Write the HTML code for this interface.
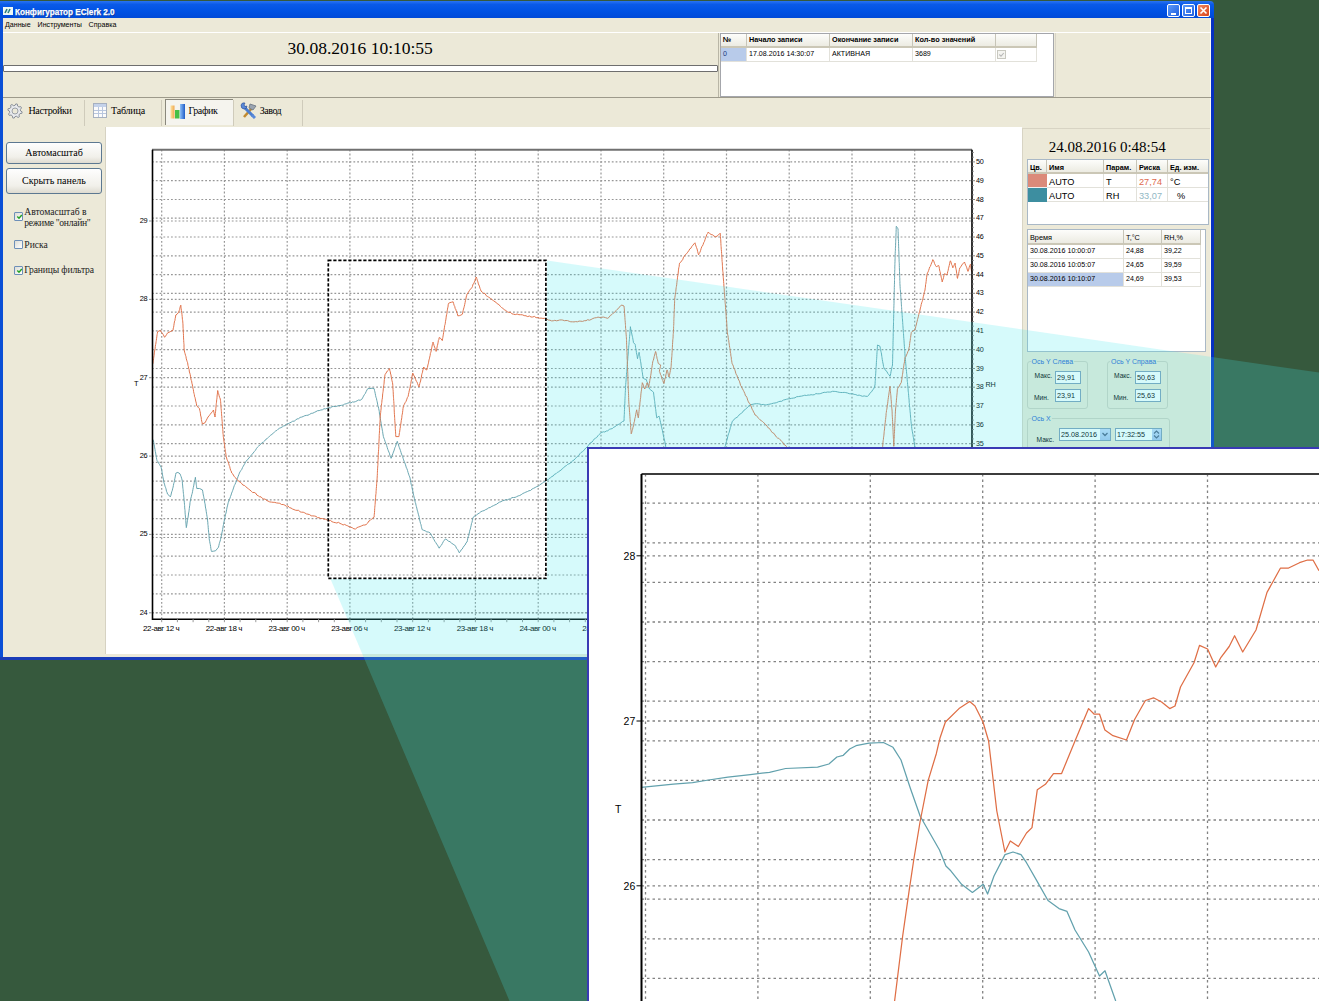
<!DOCTYPE html>
<html><head><meta charset="utf-8">
<style>
html,body{margin:0;padding:0}
body{width:1319px;height:1001px;overflow:hidden;position:relative;background:#36593d;font-family:"Liberation Sans",sans-serif;color:#000}
.a{position:absolute}
.serif{font-family:"Liberation Serif",serif}
.nw{white-space:nowrap}
#win{left:0;top:0;width:1214px;height:660px;background:transparent;overflow:hidden}
#title{left:0;top:1px;width:1214px;height:17px;border-radius:0 4px 0 0;background:linear-gradient(#2a74f2 0%,#0a5ae8 20%,#0052e4 60%,#004ad8 100%)}
.bl{background:#0a4fd6}
.tb td{position:absolute;white-space:nowrap;overflow:hidden}
.cell{position:absolute;white-space:nowrap;overflow:hidden;box-sizing:border-box}
.hd{background:linear-gradient(#fdfdfb,#ecebe2);border-right:1px solid #c7c5b8;border-bottom:2px solid #cbc7b6;font-weight:bold;font-size:7.3px;padding-left:2px;line-height:15px}
.rw{border-right:1px solid #e2e1da;border-bottom:1px solid #e2e1da;font-size:7.1px;padding-left:2px;line-height:13px}
.btn{position:absolute;box-sizing:border-box;border:1px solid #5c7891;border-radius:3px;background:linear-gradient(#fefefe,#f1f0ea 70%,#dedbd0);font-family:"Liberation Serif",serif;font-size:10px;text-align:center}
.cb{position:absolute;width:9px;height:9px;box-sizing:border-box;border:1px solid #6d8fb8;border-radius:1px;background:linear-gradient(135deg,#dcdcd5,#fff)}
.ck{position:absolute;left:1px;top:0px}
.lbl{position:absolute;font-family:"Liberation Serif",serif;font-size:9.6px;white-space:nowrap;line-height:10px;color:#222}
.tab{position:absolute;top:98px;height:28px;font-family:"Liberation Serif",serif;font-size:10px}
.sep{position:absolute;top:100px;width:1px;height:26px;background:#cfcbbb}
.gb{position:absolute;box-sizing:border-box;border:1px solid #d0d0bf;border-radius:3px}
.gt{position:absolute;color:#2a64d0;font-size:7px;background:#ece9d8;padding:0 1px;white-space:nowrap}
.sl{position:absolute;font-size:6.7px;white-space:nowrap}
.inp{position:absolute;box-sizing:border-box;border:1px solid #7f9db9;background:#fff;font-size:7.2px;padding-left:1px;line-height:11px;white-space:nowrap}
</style></head><body>
<div id="win" class="a">
  <div class="a" style="left:0;top:18px;width:1214px;height:642px;background:#ece9d8"></div>
  <div id="title" class="a">
    <svg class="a" style="left:3px;top:6px" width="10" height="8"><rect x="0" y="0" width="10" height="8" fill="#eef8f4"/><path d="M2,6 L4,2 M5,6 L7,2" stroke="#2a7a78" stroke-width="1.6"/><path d="M4.5,4 L5.5,4" stroke="#5ac8e8" stroke-width="1"/></svg>
    <div class="a nw" style="left:14.5px;top:5px;color:#fff;font-weight:bold;font-size:9.8px;transform:scaleX(0.83);transform-origin:0 0;text-shadow:1px 1px 0 #0a3aa0;-webkit-text-stroke:0.25px #fff">Конфигуратор EClerk 2.0</div>
    <div class="a" style="left:1167px;top:3px;width:13px;height:13px;box-sizing:border-box;border:1px solid #fff;border-radius:2px;background:linear-gradient(135deg,#5d9af8,#1f5fe0)"><div class="a" style="left:3px;top:8px;width:5px;height:2px;background:#fff"></div></div>
    <div class="a" style="left:1182px;top:3px;width:13px;height:13px;box-sizing:border-box;border:1px solid #fff;border-radius:2px;background:linear-gradient(135deg,#5d9af8,#1f5fe0)"><div class="a" style="left:2px;top:2px;width:7px;height:7px;box-sizing:border-box;border:1px solid #fff;border-top-width:2px"></div></div>
    <div class="a" style="left:1197px;top:3px;width:13px;height:13px;box-sizing:border-box;border:1px solid #fff;border-radius:2px;background:linear-gradient(135deg,#f08a60,#d8431c)"><svg class="a" style="left:1px;top:1px" width="9" height="9"><path d="M1.5,1.5 L7.5,7.5 M7.5,1.5 L1.5,7.5" stroke="#fff" stroke-width="1.6"/></svg></div>
  </div>
  <div class="a bl" style="left:0;top:18px;width:3px;height:642px"></div>
  <div class="a bl" style="left:1211px;top:18px;width:3px;height:642px;background:#0630c0"></div><div class="a" style="left:1210px;top:18px;width:1px;height:642px;background:#f8f8f0"></div>
  <div class="a bl" style="left:0;top:657px;width:1214px;height:3px;background:#1a3cb8"></div>
  <div class="a nw" style="left:5px;top:21px;font-size:7.1px">Данные</div>
  <div class="a nw" style="left:37.6px;top:21px;font-size:7.1px">Инструменты</div>
  <div class="a nw" style="left:88.6px;top:21px;font-size:7.1px">Справка</div>
  <div class="a" style="left:3px;top:32px;width:1208px;height:1px;background:#fff"></div>
  <!-- top panel -->
  <div class="a serif nw" style="left:287.5px;top:38px;font-size:17.5px">30.08.2016 10:10:55</div>
  <div class="a" style="left:3px;top:65px;width:715px;height:7px;box-sizing:border-box;background:#fff;border:1px solid #6e6e6e;border-radius:1px"></div>
  <div class="a" style="left:718px;top:33px;width:1px;height:64px;background:#b9b6a6"></div><div class="a" style="left:1055px;top:33px;width:1px;height:64px;background:#d8d4c6"></div>
  <div class="a" style="left:720px;top:33px;width:334px;height:64px;box-sizing:border-box;background:#fff;border:1px solid #a4a6ab;overflow:hidden">
    <div class="cell hd" style="line-height:12px;left:0;top:0;width:26px;height:14px">№</div>
    <div class="cell hd" style="line-height:12px;left:26px;top:0;width:83px;height:14px">Начало записи</div>
    <div class="cell hd" style="line-height:12px;left:109px;top:0;width:83px;height:14px">Окончание записи</div>
    <div class="cell hd" style="line-height:12px;left:192px;top:0;width:83px;height:14px">Кол-во значений</div>
    <div class="cell hd" style="line-height:12px;left:275px;top:0;width:41px;height:14px"></div>
    <div class="cell rw" style="left:0;top:14px;width:26px;height:14px;background:#b8cbea;color:#1a3a80">0</div>
    <div class="cell rw" style="left:26px;top:14px;width:83px;height:14px">17.08.2016 14:30:07</div>
    <div class="cell rw" style="left:109px;top:14px;width:83px;height:14px">АКТИВНАЯ</div>
    <div class="cell rw" style="left:192px;top:14px;width:83px;height:14px">3689</div>
    <div class="cell rw" style="left:275px;top:14px;width:41px;height:14px"><div class="a" style="left:1px;top:2px;width:7px;height:7px;border:1px solid #c8c8c0;background:#f4f4f0"><svg class="a" style="left:0;top:0" width="7" height="7"><path d="M1.3,3.5 L3,5.2 L5.8,2" stroke="#b8b8b8" stroke-width="1.1" fill="none"/></svg></div></div>
  </div>
  <div class="a" style="left:3px;top:97px;width:1208px;height:1px;background:#9d9a8b"></div>
  <!-- tabs -->
  <div class="sep" style="left:84px"></div>
  <div class="sep" style="left:161px"></div>
  <div class="sep" style="left:233px"></div>
  <div class="sep" style="left:302px"></div>
  <div class="a" style="left:165px;top:99px;width:68px;height:26px;background:#f5f4ee;border-top:1px solid #8a887c;border-left:1px solid #8a887c;box-sizing:border-box"></div>
  <svg class="a" style="left:7px;top:103px" width="16" height="16" viewBox="0 0 16 16"><path d="M13.60,8.00 L15.15,8.85 L14.75,10.49 L12.99,10.54 L11.96,11.96 L12.46,13.65 L11.01,14.54 L9.73,13.33 L8.00,13.60 L7.15,15.15 L5.51,14.75 L5.46,12.99 L4.04,11.96 L2.35,12.46 L1.46,11.01 L2.67,9.73 L2.40,8.00 L0.85,7.15 L1.25,5.51 L3.01,5.46 L4.04,4.04 L3.54,2.35 L4.99,1.46 L6.27,2.67 L8.00,2.40 L8.85,0.85 L10.49,1.25 L10.54,3.01 L11.96,4.04 L13.65,3.54 L14.54,4.99 L13.33,6.27Z" fill="#e8eaee" stroke="#8a9098" stroke-width="1"/><circle cx="8" cy="8" r="3" fill="#ece9d8" stroke="#9aa0a8" stroke-width="1"/></svg>
  <div class="tab nw" style="left:28.5px;top:105px;letter-spacing:-0.35px">Настройки</div>
  <svg class="a" style="left:93px;top:103px" width="15" height="16" viewBox="0 0 15 16"><rect x="0.5" y="0.5" width="13" height="14" fill="#fbfbfb" stroke="#a6b0c0"/><rect x="1" y="1" width="12" height="3" fill="#c4d2ea"/><path d="M1,7.5H13M1,10.5H13M5.5,4V14M9.5,4V14" stroke="#b8c6de" stroke-width="1"/></svg>
  <div class="tab nw" style="left:111px;top:105px;letter-spacing:-0.2px">Таблица</div>
  <svg class="a" style="left:170px;top:103px" width="16" height="17" viewBox="0 0 16 17"><defs><linearGradient id="gy" x1="0" x2="1"><stop offset="0" stop-color="#fde3a0"/><stop offset="1" stop-color="#f0a850"/></linearGradient><linearGradient id="gb" x1="0" x2="1"><stop offset="0" stop-color="#8ec0f8"/><stop offset="1" stop-color="#1f5cc8"/></linearGradient></defs><rect x="0.5" y="2.5" width="4" height="13" fill="url(#gy)"/><rect x="5" y="7" width="4.5" height="8.5" fill="#46c046"/><rect x="10" y="1" width="5" height="15" fill="url(#gb)"/></svg>
  <div class="tab nw" style="left:188.5px;top:105px;letter-spacing:-0.4px">График</div>
  <svg class="a" style="left:240px;top:102px" width="18" height="17" viewBox="0 0 18 17"><path d="M4,15 L12,6" stroke="#c08a30" stroke-width="2.6"/><path d="M10,2 L16,4 L13,8 L9,6 Z" fill="#9aa4b0" stroke="#6a7480" stroke-width="0.8"/><path d="M3.5,4.5 L13,14" stroke="#4a7ed0" stroke-width="3"/><path d="M1,3 Q2,0 5,1 L4,3 L5,4.5 L7,4 Q7,7 4,7 Q1,7 1,3Z" fill="#5a8ad8" stroke="#2a4a90" stroke-width="0.6"/><path d="M12,13 L15,16" stroke="#5a8ad8" stroke-width="3"/></svg>
  <div class="tab nw" style="left:259.8px;top:105px;letter-spacing:-0.5px">Завод</div>
  <!-- content -->
  <div class="a" style="left:105px;top:127px;width:1px;height:527px;background:#d6d2c2"></div>
  <div class="a" style="left:106px;top:127px;width:916px;height:527px;background:#fff"></div>
  <div class="btn" style="left:6px;top:142px;width:96px;height:22px;line-height:20px">Автомасштаб</div>
  <div class="btn" style="left:6px;top:168px;width:96px;height:26px;line-height:24px">Скрыть панель</div>
  <div class="cb" style="left:14px;top:212px"><svg class="ck" width="7" height="7"><path d="M1.3,3.5 L3,5.2 L5.8,2" stroke="#21a121" stroke-width="1.4" fill="none"/></svg></div>
  <div class="lbl" style="left:24.3px;top:206.5px">Автомасштаб в</div>
  <div class="lbl" style="left:24.3px;top:217.5px;letter-spacing:-0.3px">режиме "онлайн"</div>
  <div class="cb" style="left:14px;top:240px"></div>
  <div class="lbl" style="left:24.3px;top:239.5px">Риска</div>
  <div class="cb" style="left:14px;top:265.5px"><svg class="ck" width="7" height="7"><path d="M1.3,3.5 L3,5.2 L5.8,2" stroke="#21a121" stroke-width="1.4" fill="none"/></svg></div>
  <div class="lbl" style="left:24.3px;top:265px;letter-spacing:-0.15px">Границы фильтра</div>
  <!-- right panel -->
  <div class="a" style="left:1022px;top:128px;width:188px;height:530px;box-sizing:border-box;border-left:1px solid #d8d4c4;border-top:1px solid #d8d4c4"></div>
  <div class="a serif nw" style="left:1048.7px;top:138.5px;font-size:15px">24.08.2016 0:48:54</div>
  <div class="a" style="left:1027px;top:159px;width:182px;height:66px;box-sizing:border-box;background:#fff;border:1px solid #a9b8c6;overflow:hidden">
    <div class="cell hd" style="left:0;top:0;width:19px;height:14px">Цв.</div>
    <div class="cell hd" style="left:19px;top:0;width:57px;height:14px">Имя</div>
    <div class="cell hd" style="left:76px;top:0;width:33px;height:14px">Парам.</div>
    <div class="cell hd" style="left:109px;top:0;width:31px;height:14px">Риска</div>
    <div class="cell hd" style="left:140px;top:0;width:42px;height:14px">Ед. изм.</div>
    <div class="cell" style="left:0;top:14px;width:19px;height:14px;background:#db8a7a;border-bottom:1px solid #f0f0f0"></div>
    <div class="cell" style="left:0;top:28px;width:19px;height:14px;background:#3d8ea0"></div>
    <div class="cell rw" style="left:19px;top:14px;width:57px;height:14px;font-size:9.2px;line-height:17px">AUTO</div>
    <div class="cell rw" style="left:76px;top:14px;width:33px;height:14px;font-size:9.2px;line-height:17px">T</div>
    <div class="cell rw" style="left:109px;top:14px;width:31px;height:14px;font-size:9.2px;line-height:17px;color:#e06a4e">27,74</div>
    <div class="cell rw" style="left:140px;top:14px;width:42px;height:14px;font-size:9.2px;line-height:17px">°C</div>
    <div class="cell rw" style="left:19px;top:28px;width:57px;height:14px;font-size:9.2px;line-height:17px">AUTO</div>
    <div class="cell rw" style="left:76px;top:28px;width:33px;height:14px;font-size:9.2px;line-height:17px">RH</div>
    <div class="cell rw" style="left:109px;top:28px;width:31px;height:14px;font-size:9.2px;line-height:17px;color:#92b8c4">33,07</div>
    <div class="cell rw" style="left:140px;top:28px;width:42px;height:14px;font-size:9.2px;line-height:17px;padding-left:9px">%</div>
  </div>
  <div class="a" style="left:1027px;top:229px;width:179px;height:123px;box-sizing:border-box;background:#fff;border:1px solid #a9b8c6;overflow:hidden">
    <div class="cell hd" style="left:0;top:0;width:96px;height:15px;font-weight:normal">Время</div>
    <div class="cell hd" style="left:96px;top:0;width:38px;height:15px;font-weight:normal">T,°C</div>
    <div class="cell hd" style="left:134px;top:0;width:39px;height:15px;font-weight:normal">RH,%</div>
    <div class="cell rw" style="left:0;top:15px;width:96px;height:14px">30.08.2016 10:00:07</div>
    <div class="cell rw" style="left:96px;top:15px;width:38px;height:14px">24,88</div>
    <div class="cell rw" style="left:134px;top:15px;width:39px;height:14px">39,22</div>
    <div class="cell rw" style="left:0;top:29px;width:96px;height:14px">30.08.2016 10:05:07</div>
    <div class="cell rw" style="left:96px;top:29px;width:38px;height:14px">24,65</div>
    <div class="cell rw" style="left:134px;top:29px;width:39px;height:14px">39,59</div>
    <div class="cell rw" style="left:0;top:43px;width:96px;height:14px;background:#b8cbea">30.08.2016 10:10:07</div>
    <div class="cell rw" style="left:96px;top:43px;width:38px;height:14px">24,69</div>
    <div class="cell rw" style="left:134px;top:43px;width:39px;height:14px">39,53</div>
  </div>
  <div class="gb" style="left:1027px;top:361px;width:61px;height:48px"></div>
  <div class="gt" style="left:1030.5px;top:357.5px">Ось Y Слева</div>
  <div class="sl" style="left:1034.6px;top:372px">Макс.</div>
  <div class="inp" style="left:1055px;top:371px;width:26px;height:13px">29,91</div>
  <div class="sl" style="left:1034px;top:394px">Мин.</div>
  <div class="inp" style="left:1055px;top:389px;width:26px;height:13px">23,91</div>
  <div class="gb" style="left:1107px;top:361px;width:61px;height:48px"></div>
  <div class="gt" style="left:1110px;top:357.5px">Ось Y Справа</div>
  <div class="sl" style="left:1114px;top:372px">Макс.</div>
  <div class="inp" style="left:1135px;top:371px;width:26px;height:13px">50,63</div>
  <div class="sl" style="left:1113.5px;top:394px">Мин.</div>
  <div class="inp" style="left:1135px;top:389px;width:26px;height:13px">25,63</div>
  <div class="gb" style="left:1027px;top:418px;width:143px;height:60px"></div>
  <div class="gt" style="left:1030.5px;top:414.5px">Ось X</div>
  <div class="sl" style="left:1036.5px;top:435.5px">Макс.</div>
  <div class="inp" style="left:1059px;top:428px;width:52px;height:13px">25.08.2016<div class="a" style="right:0;top:0;width:10px;height:11px;background:linear-gradient(#c6d8f8,#a8c2ee)"><svg class="a" style="left:2px;top:3px" width="6" height="5"><path d="M0.5,1 L3,3.5 L5.5,1" stroke="#4d6185" stroke-width="1.3" fill="none"/></svg></div></div>
  <div class="inp" style="left:1115px;top:428px;width:47px;height:13px">17:32:55<div class="a" style="right:0;top:0;width:9px;height:11px;background:linear-gradient(#c6d8f8,#a8c2ee)"><svg class="a" style="left:1px;top:1px" width="7" height="9"><path d="M1,3.5 L3.5,1 L6,3.5 M1,5.5 L3.5,8 L6,5.5" stroke="#4d6185" stroke-width="1.1" fill="none"/></svg></div></div>
</div>
<svg width="1319" height="1001" style="position:absolute;left:0;top:0">
<defs><clipPath id="cp"><rect x="152.0" y="149.8" width="820.0" height="469.40000000000003"/></clipPath></defs>
<g stroke="#979797" stroke-width="1.2" stroke-dasharray="1.8 2"><line x1="161.7" y1="149.8" x2="161.7" y2="619.2"/><line x1="224.4" y1="149.8" x2="224.4" y2="619.2"/><line x1="287.2" y1="149.8" x2="287.2" y2="619.2"/><line x1="349.9" y1="149.8" x2="349.9" y2="619.2"/><line x1="412.7" y1="149.8" x2="412.7" y2="619.2"/><line x1="475.4" y1="149.8" x2="475.4" y2="619.2"/><line x1="538.2" y1="149.8" x2="538.2" y2="619.2"/><line x1="601.0" y1="149.8" x2="601.0" y2="619.2"/><line x1="663.7" y1="149.8" x2="663.7" y2="619.2"/><line x1="726.5" y1="149.8" x2="726.5" y2="619.2"/><line x1="789.2" y1="149.8" x2="789.2" y2="619.2"/><line x1="852.0" y1="149.8" x2="852.0" y2="619.2"/><line x1="914.7" y1="149.8" x2="914.7" y2="619.2"/><line x1="152.0" y1="612.6" x2="972.0" y2="612.6"/><line x1="152.0" y1="593.8" x2="972.0" y2="593.8"/><line x1="152.0" y1="575.0" x2="972.0" y2="575.0"/><line x1="152.0" y1="556.2" x2="972.0" y2="556.2"/><line x1="152.0" y1="537.5" x2="972.0" y2="537.5"/><line x1="152.0" y1="518.7" x2="972.0" y2="518.7"/><line x1="152.0" y1="499.9" x2="972.0" y2="499.9"/><line x1="152.0" y1="481.1" x2="972.0" y2="481.1"/><line x1="152.0" y1="462.3" x2="972.0" y2="462.3"/><line x1="152.0" y1="443.6" x2="972.0" y2="443.6"/><line x1="152.0" y1="424.8" x2="972.0" y2="424.8"/><line x1="152.0" y1="406.0" x2="972.0" y2="406.0"/><line x1="152.0" y1="387.2" x2="972.0" y2="387.2"/><line x1="152.0" y1="368.5" x2="972.0" y2="368.5"/><line x1="152.0" y1="349.7" x2="972.0" y2="349.7"/><line x1="152.0" y1="330.9" x2="972.0" y2="330.9"/><line x1="152.0" y1="312.1" x2="972.0" y2="312.1"/><line x1="152.0" y1="293.3" x2="972.0" y2="293.3"/><line x1="152.0" y1="274.6" x2="972.0" y2="274.6"/><line x1="152.0" y1="255.8" x2="972.0" y2="255.8"/><line x1="152.0" y1="237.0" x2="972.0" y2="237.0"/><line x1="152.0" y1="218.2" x2="972.0" y2="218.2"/><line x1="152.0" y1="199.5" x2="972.0" y2="199.5"/><line x1="152.0" y1="180.7" x2="972.0" y2="180.7"/><line x1="152.0" y1="161.9" x2="972.0" y2="161.9"/><line x1="152.0" y1="612.8" x2="972.0" y2="612.8"/><line x1="152.0" y1="534.4" x2="972.0" y2="534.4"/><line x1="152.0" y1="456.1" x2="972.0" y2="456.1"/><line x1="152.0" y1="377.7" x2="972.0" y2="377.7"/><line x1="152.0" y1="299.4" x2="972.0" y2="299.4"/><line x1="152.0" y1="221.0" x2="972.0" y2="221.0"/></g>
<g clip-path="url(#cp)" fill="none" stroke-width="0.95" stroke-linejoin="round">
<polyline points="152.8,439.4 153.5,441.0 153.8,442.7 154.1,444.5 154.4,446.2 154.7,447.9 155.0,449.4 155.2,451.2 155.5,451.9 155.8,454.0 156.1,456.1 156.4,457.4 156.7,459.3 157.0,460.5 157.8,461.5 158.7,463.3 159.5,464.4 160.4,466.1 161.2,467.5 161.5,469.3 161.8,470.4 162.1,472.4 162.4,474.1 162.8,476.5 163.1,478.0 163.4,479.1 163.7,481.5 164.0,482.9 164.5,484.1 165.0,486.2 165.5,487.3 166.0,488.8 166.5,491.3 167.0,492.2 167.5,494.1 168.9,495.2 170.3,496.9 170.8,495.7 171.2,494.0 171.7,491.8 172.2,490.8 172.6,488.8 173.1,487.1 173.4,485.5 173.8,483.3 174.2,482.3 174.5,480.3 174.8,478.8 175.2,477.0 175.6,474.6 175.9,473.1 177.9,472.4 180.0,473.8 180.5,475.2 181.1,476.6 181.6,478.2 182.1,480.1 182.3,481.3 182.4,483.1 182.6,485.0 182.7,486.0 182.9,488.3 183.1,489.6 183.2,491.2 183.4,493.3 183.6,494.5 183.7,496.0 183.9,497.8 184.0,499.6 184.2,501.0 184.3,502.2 184.5,504.8 184.6,505.5 184.7,507.9 184.9,509.7 185.0,510.5 185.1,512.9 185.2,514.2 185.4,516.0 185.5,517.1 185.6,518.8 185.8,520.6 185.9,523.1 186.0,524.0 186.2,526.2 186.3,527.6 186.6,526.2 186.9,524.4 187.2,522.0 187.5,520.3 187.8,518.6 188.1,517.1 188.4,515.0 188.6,512.9 188.9,511.8 189.1,510.2 189.3,508.6 189.6,506.0 189.8,505.2 190.0,502.7 190.3,501.2 190.5,499.7 190.9,498.1 191.3,496.8 191.8,494.5 192.2,493.4 192.6,491.3 192.9,489.6 193.3,487.6 193.7,485.9 194.0,484.0 194.3,482.1 194.7,480.4 195.1,479.2 195.4,477.3 195.6,479.4 195.8,480.2 196.0,481.6 196.2,484.2 196.4,485.3 196.6,486.8 196.8,488.5 199.6,488.5 202.4,489.9 202.7,491.2 203.0,493.2 203.3,495.0 203.6,496.2 203.9,497.8 204.2,499.0 204.5,501.0 204.8,503.1 205.1,503.9 205.3,506.0 205.6,508.1 205.9,509.0 206.2,511.3 206.5,513.2 206.7,514.6 207.0,516.4 207.3,517.8 207.5,519.0 207.6,520.9 207.8,522.2 207.9,524.5 208.1,525.6 208.2,527.4 208.4,529.5 208.5,531.0 208.7,532.7 208.8,533.8 209.0,535.4 209.1,537.2 209.2,538.6 209.4,540.2 209.7,541.6 210.0,543.3 210.3,544.6 210.6,546.5 210.9,548.7 211.2,550.3 211.5,551.4 213.6,551.2 215.7,550.7 217.1,548.9 218.5,547.2 218.9,545.4 219.3,543.6 219.7,542.2 220.1,541.1 220.5,539.6 220.9,537.5 221.3,536.0 221.6,534.6 221.9,533.0 222.3,531.2 222.6,529.5 222.9,528.0 223.2,525.9 223.5,524.6 223.8,522.5 224.2,521.1 224.5,519.7 224.8,517.8 225.2,516.3 225.6,514.2 226.0,513.1 226.4,511.1 226.7,509.3 227.1,507.0 227.5,505.9 227.9,503.9 228.3,502.4 228.9,501.0 229.4,499.3 230.0,498.1 230.5,496.4 231.1,495.0 231.6,493.1 232.2,491.8 232.7,490.4 233.2,489.0 233.8,487.1 234.4,485.4 235.0,484.3 235.7,482.8 236.3,481.1 236.9,479.8 237.5,478.2 238.2,476.2 238.8,474.7 239.4,473.1 240.2,471.4 241.0,470.6 241.8,469.3 242.6,467.4 243.3,466.2 244.1,464.8 244.9,463.4 245.7,461.8 246.8,460.2 247.9,459.5 248.9,458.0 250.0,456.8 251.1,455.3 252.2,454.2 253.2,453.0 254.3,451.6 255.4,450.4 256.5,448.4 257.5,447.2 258.6,446.2 259.7,445.0 260.9,444.1 262.1,442.6 263.4,442.1 264.6,441.0 265.8,439.3 267.1,438.7 268.3,437.4 269.5,436.2 270.7,435.2 271.9,434.4 273.2,433.2 274.4,432.2 275.6,431.0 276.9,430.4 278.1,429.2 279.3,428.3 280.8,427.7 282.3,426.9 283.8,425.8 285.2,425.7 286.7,424.1 288.2,423.7 289.7,422.9 291.2,422.2 292.7,421.2 294.2,421.2 295.7,420.0 297.1,418.9 298.6,418.7 300.1,417.4 301.6,417.1 303.2,416.5 304.8,415.7 306.4,415.4 308.0,415.2 309.6,414.4 311.2,413.4 312.8,413.2 314.4,412.4 316.0,411.6 317.6,410.7 319.2,410.6 320.8,410.0 322.4,409.8 324.0,408.7 325.6,408.9 327.2,408.2 328.8,407.6 330.4,407.9 332.0,406.7 333.6,406.4 335.2,406.6 336.8,406.3 338.4,405.6 340.0,405.6 341.6,405.3 343.1,405.1 344.6,404.1 346.2,403.8 347.8,403.1 349.3,402.7 350.9,403.0 352.4,401.9 353.9,402.1 355.5,401.6 357.1,400.8 358.6,400.0 360.1,400.3 361.7,399.4 362.6,397.9 363.5,396.2 364.4,394.6 365.2,393.7 366.1,391.7 367.0,389.9 367.9,388.6 370.0,388.6 372.0,388.2 374.1,388.6 374.5,390.4 374.9,391.9 375.2,393.4 375.6,395.6 376.0,397.3 376.4,398.2 376.8,400.4 377.2,401.8 377.6,404.1 377.9,405.6 378.3,406.8 378.7,408.7 379.0,410.1 379.3,411.6 379.5,414.1 379.8,415.1 380.1,417.0 380.4,418.5 380.6,420.3 380.9,421.9 381.2,423.7 381.5,424.7 381.7,427.0 382.0,428.2 382.3,430.1 382.6,431.5 382.8,433.1 383.1,435.0 383.4,436.6 383.9,438.1 384.5,439.6 385.1,441.5 385.6,442.9 386.1,443.9 386.7,445.7 387.2,447.4 387.8,449.4 388.4,450.9 388.9,452.1 389.4,453.2 390.0,455.5 390.6,456.7 391.1,458.3 391.7,456.8 392.2,455.4 392.8,453.8 393.4,452.1 393.9,451.0 394.5,448.9 395.0,447.4 395.6,446.3 396.2,444.1 396.7,442.6 397.3,441.3 397.8,443.2 398.3,444.0 398.9,446.3 399.4,447.7 399.9,449.0 400.4,450.4 401.0,452.4 401.5,454.1 402.0,455.2 402.6,456.4 403.1,458.3 403.6,459.9 404.2,461.4 404.8,462.8 405.3,464.2 405.9,466.1 406.4,467.9 406.9,468.7 407.5,470.4 408.1,472.6 408.6,474.1 409.1,475.5 409.7,476.9 410.1,478.1 410.4,480.5 410.8,482.4 411.1,484.1 411.5,485.4 411.9,486.5 412.2,488.9 412.6,490.0 413.0,492.1 413.3,494.0 413.7,495.5 414.0,496.6 414.4,498.6 414.8,500.0 415.2,502.3 415.6,503.1 416.0,505.2 416.4,506.7 416.8,508.1 417.2,510.1 417.6,511.2 418.0,512.9 418.5,514.8 418.9,516.1 419.3,517.7 419.7,519.9 420.1,521.7 420.5,523.5 420.9,524.3 421.3,526.3 421.7,527.8 422.1,529.6 423.7,530.3 425.2,530.8 426.8,531.9 428.3,532.0 429.9,532.7 430.7,533.7 431.6,535.7 432.4,536.6 433.3,538.5 434.1,539.8 435.0,541.6 435.8,542.6 436.7,544.1 437.5,545.1 438.4,546.8 439.2,548.2 440.2,546.4 441.3,545.4 442.3,543.6 443.3,541.6 444.4,540.2 445.4,538.9 446.9,539.8 448.5,541.2 450.0,541.7 451.6,543.2 453.1,544.2 454.7,545.1 455.6,546.2 456.5,548.3 457.5,549.3 458.4,550.9 459.3,552.8 460.3,551.5 461.2,549.8 462.2,549.1 463.1,547.4 464.1,545.9 465.1,545.0 466.0,542.9 467.0,542.0 467.4,540.6 467.8,538.2 468.2,536.7 468.7,535.8 469.1,533.9 469.5,531.8 469.9,530.0 470.3,529.2 470.7,527.3 471.1,525.8 471.5,523.5 472.0,522.3 472.4,520.4 472.8,518.6 473.2,517.2 474.8,516.0 476.3,515.2 477.9,513.9 479.4,513.0 480.9,511.7 482.5,511.0 484.1,510.6 485.6,509.6 487.1,509.0 488.7,507.8 490.2,507.5 491.8,506.4 493.4,505.7 494.9,504.9 496.5,504.3 498.0,503.1 499.6,502.1 501.1,501.7 502.7,500.7 504.2,500.4 505.8,499.7 507.3,500.0 508.9,499.1 510.4,498.9 512.0,497.6 513.5,497.5 515.1,497.4 516.6,496.7 518.2,495.9 519.7,495.5 521.2,494.7 522.8,493.5 524.4,492.8 525.9,492.1 527.5,491.5 529.0,490.7 530.5,490.5 532.1,489.0 533.6,488.3 535.2,487.5 536.8,486.6 538.3,486.2 539.7,485.0 541.0,484.0 542.4,483.3 543.7,481.9 545.1,481.8 546.4,480.3 547.8,479.9 549.1,478.6 550.5,477.7 551.9,476.5 553.2,476.0 554.6,474.2 555.9,473.8 557.3,472.4 558.6,471.8 560.0,470.7 561.3,470.0 562.5,468.4 563.8,467.5 565.1,466.3 566.4,465.6 567.6,464.4 568.9,463.8 570.2,463.4 571.5,461.8 572.7,460.8 574.0,460.0 575.2,458.8 576.4,457.3 577.6,456.6 578.8,455.4 580.0,453.6 581.2,452.4 582.4,451.7 583.6,450.7 584.8,449.2 586.0,447.8 587.2,447.1 588.4,445.4 589.6,443.7 590.8,442.6 592.0,442.1 593.2,440.5 594.3,438.9 595.5,438.2 596.7,437.5 597.9,435.8 599.1,434.5 600.3,433.4 601.8,432.4 603.3,431.8 604.8,432.0 606.3,431.0 607.8,430.8 609.3,429.4 610.8,428.9 612.3,428.6 613.8,427.2 615.2,426.6 616.7,425.3 618.1,424.6 619.6,423.8 621.1,422.7 622.5,421.5 624.0,421.0 624.1,418.9 624.1,418.3 624.2,415.9 624.3,414.6 624.4,412.9 624.4,411.4 624.5,409.4 624.6,408.0 624.7,406.2 624.7,405.0 624.8,403.8 624.9,401.9 624.9,400.6 625.0,398.3 625.1,396.5 625.2,395.4 625.2,393.8 625.3,392.3 625.4,390.5 625.5,389.1 625.5,387.6 625.6,385.8 625.7,384.6 625.9,382.4 626.0,381.0 626.1,379.7 626.2,377.5 626.4,375.8 626.5,374.4 626.6,372.6 626.8,371.7 626.9,370.1 627.0,368.0 627.2,366.3 627.3,364.6 627.4,363.2 627.5,361.4 627.7,360.2 627.8,358.7 627.9,356.8 628.1,355.0 628.2,354.1 628.3,351.8 628.5,350.4 628.6,348.8 628.7,347.3 628.8,345.5 629.0,344.2 629.1,342.5 629.2,341.3 629.4,339.5 629.5,338.3 629.6,336.4 629.8,334.9 629.9,333.2 630.0,331.4 630.1,330.2 630.3,328.5 630.4,326.7 630.7,328.8 631.0,330.1 631.3,331.7 631.6,332.9 632.0,335.0 632.3,336.2 632.6,337.5 632.9,339.1 633.2,340.8 633.5,342.7 635.1,344.3 635.4,345.7 635.6,347.7 635.9,348.9 636.2,350.3 636.4,352.6 636.7,354.0 637.0,355.0 637.2,356.7 637.5,358.7 637.9,356.7 638.3,355.4 638.7,354.3 639.1,352.3 639.4,354.3 639.6,355.6 639.9,356.8 640.1,358.6 640.4,360.2 640.6,361.7 640.9,363.0 641.1,365.2 641.4,367.0 641.6,368.5 641.9,369.5 642.1,371.5 642.4,372.8 642.6,374.9 642.9,376.2 643.1,377.9 644.7,379.1 646.3,379.5 646.8,381.4 647.4,382.3 647.9,384.1 648.4,386.2 649.0,387.4 649.5,389.0 650.8,390.0 652.2,391.1 653.5,392.2 653.7,394.1 653.9,395.8 654.1,397.0 654.3,399.1 654.5,400.3 654.7,401.4 654.9,403.7 655.1,404.9 655.3,406.2 655.5,408.7 655.7,409.3 655.9,411.5 656.1,413.0 656.3,415.0 656.5,416.1 656.7,417.8 659.1,416.2 659.5,417.5 659.8,419.2 660.2,420.7 660.6,422.7 660.9,424.1 661.3,426.1 661.6,427.1 662.0,428.9 662.4,430.3 662.7,432.7 663.1,433.8 663.4,435.7 663.8,437.3 664.1,438.7 664.5,440.1 664.8,441.4 665.2,443.7 665.5,445.0 665.7,446.7 665.9,447.9 666.2,449.7 666.4,451.3 666.6,453.6 666.8,455.4 667.1,456.4 667.3,458.6 667.5,460.0 668.3,461.3 669.0,463.0 669.8,464.6 670.6,465.8 671.4,467.4 672.1,468.4 672.9,469.5 673.7,471.4 674.5,472.9 675.2,474.0 676.0,475.6 676.8,477.0 677.6,478.1 678.3,479.8 679.1,481.3 679.9,482.8 680.7,484.5 681.4,485.6 682.2,487.6 683.0,488.9 683.8,490.4 684.5,491.6 685.3,493.0 686.1,494.3 686.8,496.0 687.6,497.0 688.4,498.7 689.2,500.2 689.9,501.5 690.7,502.6 691.5,503.9 692.3,505.3 693.0,507.0 693.8,508.7 694.6,510.3 695.4,511.6 696.1,512.7 696.9,514.7 697.7,515.5 698.5,517.4 699.2,518.1 700.0,520.0 700.6,518.8 701.2,517.2 701.9,516.0 702.5,514.4 703.1,512.7 703.8,511.3 704.4,509.7 705.0,508.1 705.6,506.2 706.2,505.0 706.9,503.9 707.5,501.7 708.1,501.0 708.8,499.0 709.4,497.4 710.0,495.5 710.6,494.4 711.2,492.7 711.9,491.7 712.5,490.4 713.1,488.9 713.8,487.1 714.4,485.4 715.0,483.6 715.6,482.7 716.2,481.1 716.9,479.7 717.5,477.9 718.1,476.9 718.8,474.7 719.4,473.3 720.0,471.8 720.6,470.6 721.2,469.4 721.9,467.2 722.5,466.1 723.1,464.8 723.8,462.7 724.4,461.1 725.0,460.0 725.0,458.4 725.0,457.0 725.0,455.4 725.0,453.5 725.0,451.5 725.0,449.9 725.0,448.3 725.0,446.6 725.5,445.4 725.9,443.3 726.4,441.7 726.8,440.4 727.2,439.2 727.7,436.8 728.1,435.1 728.6,433.6 729.1,432.5 729.5,431.0 730.0,429.0 730.4,427.4 730.9,426.2 731.3,424.7 731.8,423.2 732.2,421.4 733.4,420.5 734.6,418.7 735.8,418.0 737.0,417.3 738.2,416.3 739.4,414.5 740.6,414.0 741.8,412.6 743.0,411.8 744.2,410.0 745.4,409.3 746.6,408.4 747.8,406.9 749.0,405.8 751.0,404.7 753.0,404.2 755.0,403.8 756.7,403.7 758.3,403.8 760.0,404.1 761.7,404.7 763.3,404.4 765.0,405.0 766.7,404.8 768.3,404.4 770.0,404.1 771.7,403.7 773.3,403.2 775.0,403.0 776.7,402.6 778.3,401.8 780.0,401.3 781.7,401.3 783.3,400.1 785.0,399.7 786.7,399.2 788.3,398.9 790.0,398.7 791.7,398.3 793.3,398.1 795.0,397.8 796.7,396.7 798.3,396.6 800.0,396.3 801.6,396.1 803.2,395.7 804.8,395.2 806.4,395.5 808.0,395.0 809.5,395.1 811.1,394.7 812.7,394.9 814.3,394.7 815.9,393.6 817.5,393.8 819.2,393.8 820.8,393.5 822.5,392.8 824.2,392.3 825.8,392.4 827.5,392.0 829.2,392.1 830.8,392.0 832.5,391.3 834.2,391.4 835.8,391.5 837.5,391.9 839.2,392.3 840.8,392.5 842.5,392.5 844.2,392.4 845.8,392.6 847.5,393.0 849.2,393.7 850.8,393.8 852.5,393.7 854.2,394.4 855.8,394.6 857.5,395.4 859.2,395.1 860.8,395.7 862.5,396.3 864.2,395.9 865.8,396.3 867.5,396.3 868.5,395.5 869.6,393.8 870.6,392.4 871.7,391.7 872.8,389.6 873.8,388.8 874.4,386.8 875.0,385.0 875.1,383.7 875.2,381.3 875.3,380.5 875.4,378.5 875.5,376.5 875.6,375.2 875.7,373.8 875.8,372.1 875.9,370.6 876.0,368.6 876.1,367.1 876.2,366.3 876.3,364.1 876.4,362.6 876.5,360.6 876.6,359.2 876.7,358.3 876.8,356.4 876.9,354.6 877.0,352.6 877.1,351.3 877.2,350.1 877.3,348.1 877.4,346.7 877.5,345.0 880.0,346.3 880.3,348.3 880.6,349.7 880.9,351.3 881.2,352.4 881.5,354.0 881.8,356.4 882.0,357.6 882.3,359.7 882.6,361.3 882.9,363.0 883.2,364.1 883.5,366.4 883.8,367.5 884.8,369.2 885.9,370.8 886.9,371.5 887.9,373.6 889.0,374.8 890.0,376.3 890.4,375.2 890.7,373.6 891.1,371.2 891.4,369.8 891.8,368.0 892.1,366.6 892.5,365.0 892.5,363.2 892.6,361.9 892.6,359.8 892.7,358.2 892.7,356.9 892.7,354.9 892.8,353.6 892.8,352.5 892.8,350.8 892.9,348.5 892.9,346.7 893.0,345.9 893.0,344.5 893.0,342.5 893.1,340.4 893.1,338.9 893.2,338.0 893.2,336.4 893.2,333.8 893.3,332.4 893.3,331.0 893.3,329.2 893.4,328.1 893.4,326.1 893.5,324.9 893.5,322.7 893.5,321.4 893.6,320.2 893.6,318.4 893.7,316.1 893.7,314.5 893.7,313.5 893.8,311.6 893.8,309.9 893.8,308.4 893.9,306.9 893.9,305.7 894.0,303.4 894.0,302.1 894.0,300.1 894.1,298.8 894.1,297.4 894.2,295.2 894.2,293.9 894.2,292.5 894.3,290.2 894.3,289.3 894.3,287.4 894.4,285.9 894.4,284.3 894.5,282.9 894.5,280.6 894.5,279.4 894.6,277.3 894.6,276.0 894.7,274.4 894.7,272.4 894.7,271.1 894.8,269.6 894.8,268.2 894.8,266.9 894.9,264.7 894.9,263.3 895.0,261.8 895.0,260.0 895.1,258.8 895.1,257.2 895.2,255.7 895.2,253.4 895.3,251.6 895.4,250.8 895.4,248.3 895.5,247.1 895.6,245.8 895.6,244.0 895.7,242.2 895.7,241.2 895.8,238.9 895.9,237.6 895.9,236.3 896.0,234.0 896.1,232.6 896.1,231.1 896.2,229.6 896.2,227.6 896.3,226.3 898.0,228.8 898.1,230.4 898.1,231.6 898.2,233.2 898.2,235.1 898.3,236.5 898.3,238.9 898.4,239.8 898.5,241.4 898.5,243.5 898.6,245.1 898.6,246.2 898.7,248.4 898.7,249.8 898.8,251.2 898.9,253.0 898.9,254.2 899.0,255.9 899.0,258.1 899.1,259.2 899.1,261.3 899.2,262.2 899.3,263.8 899.3,265.3 899.4,267.6 899.4,269.0 899.5,270.1 899.5,271.7 899.6,274.1 899.7,275.4 899.7,277.3 899.8,278.1 899.8,280.3 899.9,281.4 899.9,283.6 900.0,285.0 900.1,286.7 900.2,288.4 900.3,289.6 900.5,292.0 900.6,292.8 900.7,294.3 900.8,296.6 900.9,297.6 901.0,299.2 901.2,301.2 901.3,303.1 901.4,304.9 901.5,306.4 901.6,307.4 901.7,309.6 901.9,311.4 902.0,312.3 902.1,314.6 902.2,315.7 902.3,317.4 902.4,318.7 902.6,321.1 902.7,322.5 902.8,324.5 902.9,325.7 903.0,327.0 903.1,328.7 903.3,330.3 903.4,332.7 903.5,333.5 903.6,335.1 903.7,336.9 903.8,338.3 904.0,340.3 904.1,342.1 904.2,343.8 904.3,344.9 904.4,346.5 904.5,348.5 904.7,350.3 904.8,351.7 904.9,353.4 905.0,355.0 905.1,357.0 905.3,357.9 905.4,359.7 905.6,361.5 905.7,363.2 905.9,365.2 906.0,366.5 906.2,368.2 906.3,369.6 906.5,371.6 906.6,373.2 906.8,374.3 906.9,375.8 907.1,377.5 907.2,379.3 907.3,381.4 907.5,382.4 907.6,384.4 907.8,386.1 907.9,388.0 908.1,388.8 908.2,391.1 908.4,392.3 908.5,393.7 908.7,395.8 908.8,397.7 909.0,399.0 909.1,400.1 909.2,402.7 909.4,403.7 909.5,405.6 909.7,407.3 909.8,408.5 910.0,410.3 910.1,411.8 910.3,413.2 910.4,414.8 910.6,417.1 910.7,418.4 910.9,420.5 911.0,421.3 911.2,423.2 911.3,425.0 911.6,426.3 911.8,428.7 912.1,430.1 912.4,431.8 912.6,433.0 912.9,434.2 913.1,436.2 913.4,437.6 913.7,439.0 913.9,441.1 914.2,442.5 914.5,443.9 914.7,445.9 915.0,447.5 915.1,449.5 915.2,451.2 915.3,452.3 915.4,453.5 915.6,455.8 915.7,456.8 915.8,458.8 915.9,460.0 916.0,462.5 916.1,463.7 916.2,465.2 916.3,466.6 916.4,468.5 916.6,470.5 916.7,471.6 916.8,473.0 916.9,474.9 917.0,476.9 917.1,478.0 917.2,479.9 917.3,481.8 917.4,482.8 917.6,484.9 917.7,486.2 917.8,487.4 917.9,488.9 918.0,491.4 918.1,492.6 918.2,494.2 918.3,496.3 918.4,497.5 918.6,499.1 918.7,500.5 918.8,502.5 918.9,503.6 919.0,505.5 919.1,507.4 919.2,508.8 919.3,510.0 919.4,511.6 919.6,513.8 919.7,515.4 919.8,516.4 919.9,518.9 920.0,520.0" stroke="#62a1ad"/>
<polyline points="152.8,363.9 153.1,361.8 153.3,360.5 153.6,358.5 153.8,357.1 154.1,355.4 154.3,352.9 154.6,351.1 154.8,350.0 155.1,348.8 155.3,346.3 155.6,344.6 155.8,344.0 156.1,341.6 156.3,340.5 156.6,338.3 156.8,336.9 157.1,334.5 157.3,333.6 157.6,331.7 160.4,330.3 161.3,332.2 162.3,333.1 163.2,334.5 164.6,337.3 165.5,336.2 166.5,334.7 167.4,333.1 170.2,331.7 173.0,330.3 173.3,328.0 173.6,327.3 173.9,325.3 174.2,323.2 174.6,321.1 174.9,320.6 175.2,318.4 175.5,317.0 175.8,315.0 177.2,314.1 178.6,312.2 179.2,310.7 179.7,309.3 180.2,306.8 180.8,305.2 181.0,307.3 181.2,308.5 181.4,310.8 181.6,312.5 181.8,313.0 182.0,314.8 182.2,316.6 182.4,319.3 182.6,320.2 182.8,322.0 182.9,323.8 183.0,325.0 183.0,327.0 183.1,328.4 183.2,330.0 183.3,332.0 183.4,333.6 183.5,335.7 183.5,337.1 183.6,339.1 183.7,340.6 183.8,342.5 183.9,343.7 184.0,344.6 184.0,347.2 184.1,349.0 184.2,350.0 184.6,352.2 185.0,353.4 185.5,355.3 185.9,356.3 186.3,358.8 186.7,360.1 187.1,361.4 187.6,362.7 188.0,365.5 188.4,366.7 188.8,369.0 189.1,369.4 189.4,372.0 189.8,373.1 190.2,374.4 190.5,376.2 190.8,378.5 191.2,380.3 191.6,380.8 191.9,383.2 192.2,384.0 192.6,386.3 192.9,388.2 193.3,389.3 193.6,391.7 194.0,393.5 194.3,394.5 194.6,396.8 195.0,397.5 195.3,398.8 195.7,401.1 196.0,402.0 196.4,403.8 196.7,405.9 198.1,407.2 199.5,408.7 199.8,410.6 200.1,411.6 200.4,413.2 200.7,416.0 201.1,416.9 201.4,419.5 201.7,421.2 202.0,422.1 202.3,424.0 205.1,422.7 206.1,420.7 207.0,418.9 208.0,417.0 209.1,415.8 210.2,414.3 211.3,412.9 212.4,411.6 213.5,410.0 213.9,412.4 214.2,413.5 214.6,415.2 215.0,417.0 215.2,415.7 215.3,413.3 215.5,411.8 215.7,411.0 215.8,408.7 216.0,407.1 216.2,404.7 216.3,403.6 216.5,402.2 216.7,399.8 216.9,398.9 217.0,397.3 217.2,394.9 217.4,394.0 217.5,392.1 217.7,390.5 218.2,392.4 218.6,393.6 219.1,395.7 219.6,397.4 220.0,398.0 220.5,400.3 220.6,401.3 220.8,403.8 220.9,405.9 221.0,406.6 221.1,408.5 221.3,410.3 221.4,411.6 221.5,413.3 221.6,414.9 221.8,416.6 221.9,418.6 222.0,419.8 222.2,421.6 222.3,423.8 222.4,424.4 222.5,426.8 222.7,428.7 222.8,429.7 222.9,431.3 223.0,433.7 223.2,434.6 223.3,436.6 223.5,437.8 223.8,439.8 224.0,441.8 224.2,442.6 224.5,444.5 224.7,446.2 224.9,448.5 225.2,449.6 225.4,451.8 225.6,452.5 225.9,454.3 226.1,456.2 226.6,457.9 227.1,459.8 227.6,460.7 228.1,461.9 228.6,463.3 229.2,465.4 229.7,466.5 230.2,468.8 230.7,470.4 231.2,471.0 231.7,473.0 232.9,474.1 234.0,476.2 235.2,477.4 236.4,479.0 237.5,479.8 238.7,481.4 240.1,482.0 241.5,483.3 242.9,485.1 244.3,485.4 245.7,486.6 247.1,487.8 248.5,488.9 249.9,490.0 251.3,491.2 252.7,492.6 254.1,492.4 255.5,493.0 256.9,495.1 258.3,495.8 259.6,496.8 261.0,496.8 262.4,498.4 263.8,499.1 265.2,499.0 266.6,500.5 268.0,501.0 269.7,501.9 271.4,502.1 273.1,502.3 274.8,502.4 276.4,502.9 278.1,503.1 279.8,503.3 281.5,504.5 283.2,504.5 284.9,505.2 286.4,506.3 287.9,505.8 289.5,507.7 291.0,508.0 292.5,509.0 294.0,509.6 295.5,510.2 297.0,510.4 298.6,510.2 300.1,511.9 301.6,512.2 303.2,512.2 304.8,512.9 306.4,513.9 308.0,514.2 309.6,514.6 311.2,515.8 312.8,515.9 314.4,516.0 316.0,516.4 317.6,517.7 319.2,517.7 320.8,518.6 322.4,518.5 324.0,519.2 325.6,519.2 327.2,520.1 328.8,520.9 330.4,520.4 332.0,521.7 333.6,522.3 335.2,522.6 336.8,523.0 338.4,522.3 340.0,523.4 341.6,524.1 343.1,525.0 344.6,524.4 346.2,525.3 347.8,525.9 349.3,526.8 350.9,527.2 352.4,527.8 353.9,528.8 355.5,529.0 357.1,527.6 358.6,527.0 360.1,526.5 361.7,525.8 363.2,525.1 364.8,525.0 366.1,524.6 367.5,523.3 368.8,521.1 370.1,520.5 371.4,519.2 372.8,518.1 374.1,517.2 374.2,515.4 374.3,514.2 374.5,512.5 374.6,510.6 374.7,508.7 374.8,507.3 375.0,505.4 375.1,504.4 375.2,503.0 375.3,501.0 375.5,498.9 375.6,497.5 375.7,496.1 375.8,494.8 376.0,493.5 376.1,491.3 376.2,490.3 376.3,488.4 376.5,486.6 376.6,484.9 376.7,483.4 376.8,482.1 377.0,480.1 377.1,478.9 377.2,477.0 377.3,475.3 377.4,473.4 377.4,472.2 377.5,470.7 377.6,468.2 377.7,467.1 377.8,465.5 377.9,464.5 377.9,462.9 378.0,460.5 378.1,459.6 378.2,457.8 378.3,455.5 378.3,454.1 378.4,452.0 378.5,451.3 378.6,449.5 378.7,448.2 378.8,446.4 378.8,444.6 378.9,443.1 379.0,441.2 379.1,438.9 379.2,438.0 379.2,435.5 379.3,434.1 379.4,433.3 379.5,430.7 379.6,429.1 379.6,427.5 379.7,427.0 379.8,424.3 379.9,422.5 380.0,422.0 380.1,419.4 380.1,418.7 380.2,416.9 380.3,415.0 380.5,413.9 380.7,412.4 380.9,410.3 381.1,409.0 381.2,406.3 381.4,405.7 381.6,403.7 381.8,402.4 382.0,399.9 382.2,399.2 382.4,397.9 382.6,395.0 382.7,393.8 382.9,392.5 383.1,391.3 383.3,388.8 383.5,387.1 383.7,385.6 383.9,384.5 384.1,383.1 384.2,381.0 384.4,379.4 384.6,377.8 384.8,376.1 385.0,374.7 386.1,373.0 387.3,371.0 388.5,370.1 389.6,368.5 389.9,370.9 390.3,371.8 390.6,374.0 391.0,374.9 391.3,377.4 391.7,379.2 392.0,380.8 392.4,382.3 392.7,384.0 392.8,385.6 392.9,387.5 393.0,389.5 393.1,390.1 393.2,391.7 393.3,394.2 393.4,396.1 393.5,397.2 393.6,398.7 393.7,400.7 393.8,401.6 393.9,403.4 394.0,404.9 394.1,407.1 394.2,408.4 394.2,409.9 394.3,412.2 394.4,414.2 394.5,414.9 394.6,417.2 394.7,418.4 394.8,420.7 394.9,421.9 395.0,423.1 395.1,424.7 395.2,426.1 395.3,428.4 395.4,429.9 395.5,431.2 395.6,433.1 395.7,434.7 395.8,436.6 398.9,436.6 399.1,435.4 399.4,432.8 399.6,432.4 399.9,430.0 400.1,428.6 400.4,426.8 400.6,425.6 400.8,424.0 401.1,422.0 401.3,420.3 401.6,419.0 401.8,417.5 402.0,415.2 402.3,414.1 402.5,412.8 402.8,410.4 403.0,408.5 403.3,406.9 403.5,405.6 404.3,404.4 405.1,402.7 405.9,401.6 406.6,399.9 407.4,397.5 408.2,396.3 408.5,394.2 408.9,392.6 409.2,390.9 409.5,390.0 409.8,388.5 410.2,386.9 410.5,384.4 410.8,383.6 411.2,381.1 411.5,379.6 411.8,378.4 412.1,375.8 412.5,374.2 412.8,373.1 413.5,375.1 414.2,375.9 414.9,377.5 415.6,379.4 416.2,381.1 416.9,381.7 417.6,383.7 418.3,385.4 419.0,387.0 419.4,385.3 419.8,383.3 420.2,382.1 420.6,381.0 421.0,378.5 421.4,377.1 421.7,374.8 422.1,373.4 422.5,372.2 422.9,369.8 423.3,369.2 423.7,367.0 425.2,369.1 426.8,370.0 427.2,367.8 427.5,367.3 427.9,364.9 428.3,363.8 428.6,362.2 429.0,359.9 429.4,358.8 429.7,357.1 430.1,355.7 430.4,353.3 430.8,352.3 431.2,351.0 431.5,348.9 431.9,347.1 432.3,344.8 432.6,343.7 433.0,342.1 433.5,343.4 434.0,345.5 434.6,347.0 435.1,348.4 435.6,349.4 436.1,351.4 436.5,349.9 436.9,348.1 437.3,345.7 437.6,345.0 438.0,342.9 438.4,340.4 438.8,339.8 439.2,337.5 440.8,338.5 442.3,340.6 442.6,338.7 442.8,337.7 443.1,335.9 443.4,334.2 443.6,332.7 443.9,330.8 444.2,329.0 444.5,327.2 444.7,325.4 445.0,324.7 445.3,323.2 445.5,321.3 445.8,319.9 446.1,317.8 446.3,316.0 446.6,314.6 446.9,313.6 447.2,310.8 447.4,309.9 447.7,307.9 448.0,307.0 448.2,304.8 448.5,303.4 450.0,302.6 451.6,302.2 453.1,301.8 453.6,303.4 454.1,305.3 454.7,306.3 455.2,308.5 455.7,309.0 456.2,310.8 456.8,312.1 457.3,313.7 457.8,315.8 459.3,315.7 460.9,315.1 462.4,314.2 462.8,312.1 463.2,310.4 463.5,309.1 463.9,307.8 464.3,306.3 464.7,304.5 465.1,302.6 465.5,300.3 465.9,299.0 466.2,297.0 466.6,295.8 467.0,294.1 468.2,292.6 469.4,290.6 470.5,289.1 471.7,287.9 472.4,286.7 473.0,284.1 473.7,283.7 474.3,282.2 475.0,280.7 475.6,278.4 476.3,277.0 476.8,278.6 477.3,280.2 477.9,281.9 478.4,283.9 478.9,285.0 479.4,286.1 480.0,288.4 480.5,289.4 481.0,291.0 482.3,292.2 483.6,293.4 484.9,293.4 486.1,295.5 487.4,296.4 488.7,297.2 490.3,298.3 491.9,299.5 493.4,300.6 495.0,301.8 496.3,302.5 497.6,304.1 498.9,304.5 500.3,306.3 501.6,307.6 502.9,308.4 504.2,309.6 505.8,310.5 507.3,311.8 508.9,312.4 510.4,312.2 511.9,313.8 513.5,314.2 515.3,314.6 517.1,314.0 518.9,314.7 520.6,314.7 522.4,314.8 524.2,315.6 526.0,315.8 527.7,316.6 529.4,316.0 531.0,317.0 532.7,317.0 534.4,316.4 536.1,317.7 537.8,317.5 539.5,318.2 541.1,318.1 542.8,318.4 544.5,318.3 546.3,318.7 548.2,320.0 550.0,320.2 551.6,320.9 553.2,320.8 554.8,320.3 556.4,320.8 558.0,320.5 559.6,320.0 561.2,319.9 562.8,320.1 564.4,320.7 566.0,320.5 567.6,320.6 569.2,321.3 570.8,321.8 572.4,321.8 574.0,321.9 575.7,321.6 577.4,321.8 579.1,321.1 580.9,321.2 582.6,321.4 584.3,320.7 586.0,320.7 587.7,319.7 589.4,320.2 591.1,319.5 592.9,318.5 594.6,317.9 596.3,317.7 598.0,317.1 599.9,317.5 601.8,317.2 603.7,317.1 605.6,317.7 607.5,318.3 608.9,317.5 610.4,315.4 611.8,314.6 613.3,313.1 614.7,312.3 615.9,310.7 617.1,309.4 618.3,308.6 619.5,307.0 620.7,305.6 621.9,305.1 624.0,306.0 624.1,307.1 624.3,308.9 624.4,311.0 624.5,312.1 624.6,313.7 624.8,316.0 624.9,317.6 625.0,319.7 625.1,320.5 625.3,322.7 625.4,324.3 625.5,325.5 625.6,328.5 625.8,329.1 625.9,330.6 626.0,332.8 626.1,334.1 626.3,336.4 626.4,337.9 626.5,339.3 626.5,340.7 626.6,342.2 626.6,344.8 626.7,345.8 626.8,348.1 626.8,349.3 626.9,351.6 627.0,352.4 627.0,353.9 627.1,355.6 627.1,358.0 627.2,359.4 627.3,360.6 627.3,361.9 627.4,364.4 627.4,366.4 627.5,367.5 627.6,368.3 627.6,370.0 627.7,371.7 627.8,373.5 627.8,374.9 627.9,376.6 627.9,379.1 628.0,381.1 628.1,381.7 628.1,384.4 628.2,385.4 628.2,387.5 628.3,389.3 628.4,390.9 628.4,391.3 628.5,393.3 628.6,395.4 628.6,397.5 628.7,397.9 628.7,399.9 628.8,401.8 628.9,403.9 629.0,404.5 629.2,406.4 629.3,408.0 629.4,410.1 629.5,412.0 629.6,412.5 629.8,414.9 629.9,416.5 630.0,418.3 630.1,419.5 630.2,421.6 630.4,422.4 630.5,424.1 630.6,425.4 630.7,427.8 630.8,429.0 631.0,430.3 631.1,431.7 631.2,433.8 631.7,432.5 632.1,430.7 632.6,429.3 633.0,427.2 633.5,425.8 633.8,424.2 634.1,422.1 634.5,421.3 634.8,418.7 635.1,417.8 635.4,416.6 635.7,414.8 636.1,412.4 636.4,411.0 636.7,409.8 637.0,411.9 637.3,413.2 637.7,415.1 638.0,416.7 638.3,417.8 638.5,416.1 638.7,415.2 638.8,413.3 639.0,411.2 639.2,409.6 639.4,407.6 639.6,406.5 639.8,405.7 639.9,402.9 640.1,401.9 640.3,399.7 640.5,398.1 640.7,397.3 640.8,395.1 641.0,393.2 641.2,391.8 641.4,390.9 641.6,389.2 641.8,386.8 641.9,385.5 642.1,384.9 642.3,382.7 642.9,383.9 643.5,385.9 644.1,387.3 644.7,389.0 645.3,387.8 645.9,386.0 646.5,384.7 647.1,382.7 647.6,384.3 648.2,385.4 648.7,387.4 649.0,385.4 649.2,383.6 649.5,383.1 649.8,380.5 650.0,378.8 650.3,378.5 650.6,375.9 650.8,375.2 651.1,373.1 651.3,370.9 651.6,369.9 651.8,367.9 652.0,367.2 652.2,365.3 652.5,363.7 652.7,361.9 653.2,360.5 653.7,359.0 654.2,356.5 654.6,355.1 655.1,353.2 655.6,351.5 656.0,352.7 656.4,355.4 656.8,356.8 657.1,358.8 657.5,359.7 657.9,361.8 658.3,363.5 660.7,365.0 660.4,366.6 660.0,368.6 659.7,369.3 659.4,371.5 660.0,372.8 660.5,374.5 661.1,375.4 661.6,377.6 662.2,379.3 662.8,380.4 663.3,382.2 663.9,383.5 664.3,381.9 664.7,379.7 665.1,378.2 665.5,377.4 665.9,374.8 666.3,373.2 666.7,371.0 667.1,369.9 667.6,371.3 668.0,373.0 668.5,375.8 669.0,377.0 669.4,375.6 669.7,374.1 670.0,372.5 670.4,370.3 670.8,369.0 671.1,366.7 671.2,365.1 671.3,363.2 671.4,362.3 671.5,360.6 671.6,359.0 671.8,356.7 671.9,355.4 672.0,353.2 672.1,352.4 672.2,350.6 672.3,348.1 672.4,347.3 672.5,344.6 672.6,342.8 672.7,342.0 672.8,339.7 673.0,338.4 673.1,336.9 673.2,334.4 673.3,333.7 673.4,331.4 673.5,330.0 673.6,328.3 673.6,326.5 673.7,325.5 673.8,323.8 673.8,321.6 673.9,319.7 673.9,318.3 674.0,316.9 674.1,314.8 674.1,313.3 674.2,312.5 674.3,310.8 674.3,309.5 674.4,307.9 674.4,306.1 674.5,303.8 674.6,301.9 674.6,300.5 674.7,299.1 674.9,297.4 675.1,295.9 675.4,294.3 675.6,292.4 675.8,291.4 676.0,289.0 676.2,287.6 676.4,286.6 676.7,284.8 676.9,282.5 677.1,280.8 677.3,279.9 677.5,277.2 677.8,275.7 678.0,274.7 678.2,273.0 678.4,270.9 678.6,269.1 678.8,267.7 679.1,266.8 679.3,264.8 679.5,263.2 680.5,262.5 681.6,260.9 682.6,259.8 683.6,257.1 684.6,255.9 685.7,254.3 686.7,253.6 687.7,252.2 688.8,250.7 689.8,248.9 690.9,248.3 691.9,246.3 692.9,245.2 694.0,243.8 695.0,242.8 695.5,244.9 696.0,246.1 696.5,247.6 697.1,249.0 697.6,251.3 698.1,253.3 698.6,254.8 699.2,253.5 699.9,252.3 700.5,250.7 701.2,248.4 701.8,246.7 702.4,246.0 703.1,244.6 703.7,242.7 704.4,241.6 705.0,239.7 705.6,237.8 706.3,236.1 706.9,234.4 707.6,233.7 708.2,232.0 709.6,233.5 711.1,234.5 712.5,234.8 714.0,236.1 715.4,236.8 717.0,236.2 718.6,234.8 720.2,233.2 720.3,235.0 720.4,236.4 720.5,238.2 720.7,239.4 720.8,241.0 720.9,243.4 721.0,245.5 721.1,246.5 721.2,248.0 721.3,249.6 721.5,251.4 721.6,253.5 721.7,254.7 721.8,257.0 721.9,257.6 722.0,259.5 722.1,261.4 722.3,262.9 722.4,265.2 722.5,266.8 722.6,268.0 722.7,270.2 722.8,271.4 723.0,272.2 723.1,274.6 723.2,276.2 723.3,277.7 723.4,279.0 723.6,281.2 723.7,283.1 723.8,283.6 723.9,286.0 724.0,287.2 724.2,289.0 724.3,291.2 724.4,292.9 724.5,294.1 724.6,295.1 724.8,297.7 724.9,298.3 725.0,300.2 725.1,302.4 725.2,303.3 725.4,304.9 725.5,307.4 725.6,309.1 725.7,309.8 725.8,311.5 726.0,313.0 726.1,314.4 726.2,316.2 726.3,318.8 726.4,319.2 726.6,321.0 726.7,322.6 726.8,324.0 726.9,326.3 727.0,328.2 727.2,329.9 727.3,331.3 727.4,332.7 727.7,334.8 727.9,335.3 728.2,337.3 728.4,339.9 728.7,340.3 728.9,342.2 729.2,344.1 729.4,345.5 729.7,347.5 729.9,348.4 730.2,350.3 730.4,353.0 730.7,353.5 730.9,356.2 731.2,356.8 731.4,359.6 731.7,360.8 731.9,362.4 732.2,363.8 732.8,364.8 733.4,366.2 734.0,368.7 734.6,369.3 735.2,370.9 735.8,373.3 736.4,374.8 737.0,375.2 737.6,377.9 738.2,378.8 738.8,380.1 739.4,381.2 740.0,383.1 740.6,385.5 741.2,386.0 741.8,387.8 742.5,388.8 743.3,390.3 744.0,391.7 744.8,393.5 745.5,395.8 746.2,396.1 747.0,397.7 747.7,400.2 748.4,401.8 749.2,403.2 749.9,403.7 750.7,405.3 751.4,407.0 752.1,409.2 752.8,410.2 753.6,412.1 754.3,413.1 755.0,415.0 756.2,415.4 757.5,417.0 758.8,418.6 760.0,419.8 761.2,420.6 762.5,421.5 763.8,422.8 765.0,423.8 766.1,425.0 767.2,426.3 768.3,428.0 769.4,428.4 770.6,430.2 771.7,431.9 772.8,433.0 773.9,433.3 775.0,435.0 776.3,436.9 777.5,438.0 778.8,438.3 780.0,439.7 781.3,440.9 782.5,441.9 783.8,444.5 785.0,444.9 786.3,446.3 787.4,448.0 788.4,448.2 789.5,449.2 790.5,451.6 791.6,452.8 792.6,454.2 793.7,455.0 794.7,456.0 795.8,457.5 796.8,457.8 797.9,459.6 798.9,460.7 800.0,462.0 801.2,462.5 802.5,464.2 803.8,464.9 805.0,466.2 806.2,467.0 807.5,468.0 808.8,469.1 810.0,470.4 811.2,472.0 812.5,473.0 813.8,473.9 815.0,474.9 816.2,475.2 817.5,477.2 818.8,477.2 820.0,478.0 821.2,479.6 822.5,481.0 823.8,481.5 825.0,482.9 826.2,483.4 827.5,485.4 828.8,485.8 830.0,486.8 831.2,487.9 832.5,489.5 833.8,490.6 835.0,491.0 836.2,492.0 837.5,493.2 838.8,493.5 840.0,495.0 841.2,496.7 842.5,497.6 843.8,497.6 845.0,499.8 846.2,500.2 847.5,502.0 848.8,502.2 850.0,503.0 851.2,504.5 852.5,506.0 853.8,506.4 855.0,508.1 856.2,508.9 857.5,509.4 858.8,510.4 860.0,511.7 861.2,512.6 862.5,513.6 863.8,515.0 865.0,516.4 866.2,517.0 867.5,517.4 868.8,518.6 870.0,520.0 870.3,518.2 870.6,516.9 871.0,514.7 871.3,513.0 871.6,511.7 871.9,510.0 872.3,508.1 872.6,507.2 872.9,506.1 873.2,503.9 873.5,502.6 873.9,501.1 874.2,499.5 874.5,498.0 874.8,495.7 875.2,494.4 875.5,492.0 875.8,491.5 876.1,489.2 876.5,487.7 876.8,486.7 877.1,484.2 877.4,482.5 877.7,481.7 878.1,479.8 878.4,477.5 878.7,475.8 879.0,474.6 879.4,472.5 879.7,472.1 880.0,470.0 880.2,467.9 880.4,466.5 880.5,465.0 880.7,463.6 880.9,461.9 881.1,460.5 881.2,459.0 881.4,457.1 881.6,455.0 881.8,454.6 882.0,452.6 882.1,450.1 882.3,449.0 882.5,447.5 882.7,446.3 882.8,445.0 883.0,442.1 883.2,440.4 883.4,439.5 883.5,437.8 883.7,436.9 883.9,435.2 884.1,432.9 884.2,431.5 884.4,430.1 884.6,428.9 884.7,426.4 884.9,425.1 885.1,423.1 885.3,422.2 885.4,419.8 885.6,419.5 885.8,417.3 886.0,415.8 886.1,413.5 886.3,412.5 886.5,410.5 886.8,409.2 887.0,408.1 887.2,406.0 887.5,404.0 887.7,403.3 887.9,401.3 888.1,399.4 888.4,397.3 888.6,395.8 888.8,395.0 889.1,392.3 889.3,391.3 889.5,389.7 889.8,387.7 890.0,386.3 890.1,388.4 890.3,390.3 890.4,391.9 890.6,393.4 890.7,394.3 890.9,395.8 891.0,398.1 891.1,399.6 891.3,401.1 891.4,403.7 891.6,404.5 891.7,407.1 891.9,408.9 892.0,410.0 892.1,411.1 892.2,413.9 892.2,414.8 892.3,416.2 892.4,417.8 892.5,419.3 892.6,421.5 892.7,423.0 892.7,425.3 892.8,427.0 892.9,427.5 893.0,429.7 893.1,431.3 893.1,432.6 893.2,434.4 893.3,436.1 893.4,438.3 893.5,439.5 893.6,440.8 893.6,442.6 893.7,444.6 893.8,446.3 893.9,444.7 894.0,442.6 894.0,441.6 894.1,439.3 894.2,438.3 894.3,436.6 894.3,434.3 894.4,433.5 894.5,431.3 894.6,429.9 894.6,428.3 894.7,426.7 894.8,424.8 894.9,422.6 895.0,422.0 895.0,420.4 895.1,418.2 895.2,416.7 895.3,414.6 895.3,413.9 895.4,411.9 895.5,410.0 895.7,408.0 895.8,407.2 896.0,405.8 896.1,403.3 896.3,402.5 896.4,400.2 896.6,398.1 896.7,397.3 896.9,395.1 897.0,394.0 897.2,392.2 897.3,389.9 897.5,388.8 898.5,387.3 899.4,386.1 900.3,384.0 901.3,382.5 901.5,380.9 901.8,379.7 902.0,377.4 902.3,375.8 902.5,374.3 902.8,373.0 903.0,370.4 903.3,368.6 903.5,367.9 903.8,365.9 904.0,363.9 904.3,363.0 904.5,361.4 904.8,359.2 905.0,357.5 905.8,356.7 906.5,355.0 907.3,353.3 908.0,351.2 908.8,350.0 909.0,347.7 909.3,347.1 909.5,345.6 909.7,343.4 909.9,342.0 910.2,340.5 910.4,338.5 910.6,337.5 910.8,335.8 911.1,333.9 911.3,332.5 913.1,330.7 915.0,330.0 915.4,328.4 915.8,326.4 916.2,325.3 916.7,322.9 917.1,321.5 917.5,319.6 917.9,318.2 918.3,316.8 918.8,314.4 919.2,312.7 919.6,311.6 920.0,310.0 920.4,307.9 920.8,306.7 921.2,304.5 921.7,302.8 922.1,301.7 922.5,300.6 922.9,298.8 923.3,296.7 923.8,294.9 924.2,292.7 924.6,291.4 925.0,290.0 925.2,288.1 925.4,287.3 925.6,284.4 925.8,283.9 926.1,281.6 926.3,279.8 926.5,277.9 926.7,277.2 926.9,274.9 927.5,272.9 928.1,271.9 928.7,270.3 929.3,268.4 929.8,266.9 930.4,266.4 931.0,264.6 931.6,263.0 932.2,261.7 932.8,259.6 933.7,260.8 934.5,263.4 935.4,265.3 936.3,266.7 938.7,265.5 939.1,266.8 939.4,268.7 939.8,271.1 940.1,271.8 940.5,274.1 940.8,274.9 941.2,277.2 941.5,278.3 941.9,280.3 942.2,281.9 942.7,280.1 943.1,279.1 943.6,277.3 944.0,275.3 944.5,273.7 946.9,274.9 947.3,273.6 947.7,271.7 948.1,270.6 948.5,268.3 948.8,267.1 949.2,265.6 949.6,263.8 950.0,261.7 950.4,260.8 951.0,262.1 951.6,264.5 952.2,265.6 952.8,267.8 953.6,266.6 954.3,264.7 955.1,263.1 955.4,265.4 955.6,267.0 955.9,268.5 956.2,269.7 956.4,271.0 956.7,273.4 957.0,275.3 957.2,277.3 957.5,278.4 957.9,276.2 958.3,274.4 958.6,273.8 959.0,271.7 959.4,269.5 959.8,267.8 961.0,266.7 962.1,264.4 963.3,263.5 964.5,262.0 965.1,263.8 965.7,265.3 966.2,266.2 966.8,267.8 967.4,270.0 968.0,271.4 968.6,270.2 969.2,267.3 969.8,265.4 970.4,264.3 970.7,265.5 971.0,268.2 971.3,269.5 971.6,271.4 972.3,269.6 973.0,268.0" stroke="#df6e45"/>
</g>
<path d="M152.0,149.8 H972.0" stroke="#707070" stroke-width="2" fill="none"/>
<path d="M152.5,149.8 V619.2 H972.0 V149.8" stroke="#000" stroke-width="1.6" fill="none"/>
<line x1="972.0" y1="617.3" x2="973.8" y2="617.3" stroke="#777" stroke-width="0.9"/>
<line x1="972.0" y1="612.6" x2="975.0" y2="612.6" stroke="#777" stroke-width="0.9"/>
<line x1="972.0" y1="607.9" x2="973.8" y2="607.9" stroke="#777" stroke-width="0.9"/>
<line x1="972.0" y1="603.2" x2="973.8" y2="603.2" stroke="#777" stroke-width="0.9"/>
<line x1="972.0" y1="598.5" x2="973.8" y2="598.5" stroke="#777" stroke-width="0.9"/>
<line x1="972.0" y1="593.8" x2="975.0" y2="593.8" stroke="#777" stroke-width="0.9"/>
<line x1="972.0" y1="589.1" x2="973.8" y2="589.1" stroke="#777" stroke-width="0.9"/>
<line x1="972.0" y1="584.4" x2="973.8" y2="584.4" stroke="#777" stroke-width="0.9"/>
<line x1="972.0" y1="579.7" x2="973.8" y2="579.7" stroke="#777" stroke-width="0.9"/>
<line x1="972.0" y1="575.0" x2="975.0" y2="575.0" stroke="#777" stroke-width="0.9"/>
<line x1="972.0" y1="570.3" x2="973.8" y2="570.3" stroke="#777" stroke-width="0.9"/>
<line x1="972.0" y1="565.6" x2="973.8" y2="565.6" stroke="#777" stroke-width="0.9"/>
<line x1="972.0" y1="560.9" x2="973.8" y2="560.9" stroke="#777" stroke-width="0.9"/>
<line x1="972.0" y1="556.2" x2="975.0" y2="556.2" stroke="#777" stroke-width="0.9"/>
<line x1="972.0" y1="551.5" x2="973.8" y2="551.5" stroke="#777" stroke-width="0.9"/>
<line x1="972.0" y1="546.8" x2="973.8" y2="546.8" stroke="#777" stroke-width="0.9"/>
<line x1="972.0" y1="542.2" x2="973.8" y2="542.2" stroke="#777" stroke-width="0.9"/>
<line x1="972.0" y1="537.5" x2="975.0" y2="537.5" stroke="#777" stroke-width="0.9"/>
<line x1="972.0" y1="532.8" x2="973.8" y2="532.8" stroke="#777" stroke-width="0.9"/>
<line x1="972.0" y1="528.1" x2="973.8" y2="528.1" stroke="#777" stroke-width="0.9"/>
<line x1="972.0" y1="523.4" x2="973.8" y2="523.4" stroke="#777" stroke-width="0.9"/>
<line x1="972.0" y1="518.7" x2="975.0" y2="518.7" stroke="#777" stroke-width="0.9"/>
<line x1="972.0" y1="514.0" x2="973.8" y2="514.0" stroke="#777" stroke-width="0.9"/>
<line x1="972.0" y1="509.3" x2="973.8" y2="509.3" stroke="#777" stroke-width="0.9"/>
<line x1="972.0" y1="504.6" x2="973.8" y2="504.6" stroke="#777" stroke-width="0.9"/>
<line x1="972.0" y1="499.9" x2="975.0" y2="499.9" stroke="#777" stroke-width="0.9"/>
<line x1="972.0" y1="495.2" x2="973.8" y2="495.2" stroke="#777" stroke-width="0.9"/>
<line x1="972.0" y1="490.5" x2="973.8" y2="490.5" stroke="#777" stroke-width="0.9"/>
<line x1="972.0" y1="485.8" x2="973.8" y2="485.8" stroke="#777" stroke-width="0.9"/>
<line x1="972.0" y1="481.1" x2="975.0" y2="481.1" stroke="#777" stroke-width="0.9"/>
<line x1="972.0" y1="476.4" x2="973.8" y2="476.4" stroke="#777" stroke-width="0.9"/>
<line x1="972.0" y1="471.7" x2="973.8" y2="471.7" stroke="#777" stroke-width="0.9"/>
<line x1="972.0" y1="467.0" x2="973.8" y2="467.0" stroke="#777" stroke-width="0.9"/>
<line x1="972.0" y1="462.3" x2="975.0" y2="462.3" stroke="#777" stroke-width="0.9"/>
<line x1="972.0" y1="457.7" x2="973.8" y2="457.7" stroke="#777" stroke-width="0.9"/>
<line x1="972.0" y1="453.0" x2="973.8" y2="453.0" stroke="#777" stroke-width="0.9"/>
<line x1="972.0" y1="448.3" x2="973.8" y2="448.3" stroke="#777" stroke-width="0.9"/>
<line x1="972.0" y1="443.6" x2="975.0" y2="443.6" stroke="#777" stroke-width="0.9"/>
<line x1="972.0" y1="438.9" x2="973.8" y2="438.9" stroke="#777" stroke-width="0.9"/>
<line x1="972.0" y1="434.2" x2="973.8" y2="434.2" stroke="#777" stroke-width="0.9"/>
<line x1="972.0" y1="429.5" x2="973.8" y2="429.5" stroke="#777" stroke-width="0.9"/>
<line x1="972.0" y1="424.8" x2="975.0" y2="424.8" stroke="#777" stroke-width="0.9"/>
<line x1="972.0" y1="420.1" x2="973.8" y2="420.1" stroke="#777" stroke-width="0.9"/>
<line x1="972.0" y1="415.4" x2="973.8" y2="415.4" stroke="#777" stroke-width="0.9"/>
<line x1="972.0" y1="410.7" x2="973.8" y2="410.7" stroke="#777" stroke-width="0.9"/>
<line x1="972.0" y1="406.0" x2="975.0" y2="406.0" stroke="#777" stroke-width="0.9"/>
<line x1="972.0" y1="401.3" x2="973.8" y2="401.3" stroke="#777" stroke-width="0.9"/>
<line x1="972.0" y1="396.6" x2="973.8" y2="396.6" stroke="#777" stroke-width="0.9"/>
<line x1="972.0" y1="391.9" x2="973.8" y2="391.9" stroke="#777" stroke-width="0.9"/>
<line x1="972.0" y1="387.2" x2="975.0" y2="387.2" stroke="#777" stroke-width="0.9"/>
<line x1="972.0" y1="382.5" x2="973.8" y2="382.5" stroke="#777" stroke-width="0.9"/>
<line x1="972.0" y1="377.8" x2="973.8" y2="377.8" stroke="#777" stroke-width="0.9"/>
<line x1="972.0" y1="373.2" x2="973.8" y2="373.2" stroke="#777" stroke-width="0.9"/>
<line x1="972.0" y1="368.5" x2="975.0" y2="368.5" stroke="#777" stroke-width="0.9"/>
<line x1="972.0" y1="363.8" x2="973.8" y2="363.8" stroke="#777" stroke-width="0.9"/>
<line x1="972.0" y1="359.1" x2="973.8" y2="359.1" stroke="#777" stroke-width="0.9"/>
<line x1="972.0" y1="354.4" x2="973.8" y2="354.4" stroke="#777" stroke-width="0.9"/>
<line x1="972.0" y1="349.7" x2="975.0" y2="349.7" stroke="#777" stroke-width="0.9"/>
<line x1="972.0" y1="345.0" x2="973.8" y2="345.0" stroke="#777" stroke-width="0.9"/>
<line x1="972.0" y1="340.3" x2="973.8" y2="340.3" stroke="#777" stroke-width="0.9"/>
<line x1="972.0" y1="335.6" x2="973.8" y2="335.6" stroke="#777" stroke-width="0.9"/>
<line x1="972.0" y1="330.9" x2="975.0" y2="330.9" stroke="#777" stroke-width="0.9"/>
<line x1="972.0" y1="326.2" x2="973.8" y2="326.2" stroke="#777" stroke-width="0.9"/>
<line x1="972.0" y1="321.5" x2="973.8" y2="321.5" stroke="#777" stroke-width="0.9"/>
<line x1="972.0" y1="316.8" x2="973.8" y2="316.8" stroke="#777" stroke-width="0.9"/>
<line x1="972.0" y1="312.1" x2="975.0" y2="312.1" stroke="#777" stroke-width="0.9"/>
<line x1="972.0" y1="307.4" x2="973.8" y2="307.4" stroke="#777" stroke-width="0.9"/>
<line x1="972.0" y1="302.7" x2="973.8" y2="302.7" stroke="#777" stroke-width="0.9"/>
<line x1="972.0" y1="298.0" x2="973.8" y2="298.0" stroke="#777" stroke-width="0.9"/>
<line x1="972.0" y1="293.3" x2="975.0" y2="293.3" stroke="#777" stroke-width="0.9"/>
<line x1="972.0" y1="288.7" x2="973.8" y2="288.7" stroke="#777" stroke-width="0.9"/>
<line x1="972.0" y1="284.0" x2="973.8" y2="284.0" stroke="#777" stroke-width="0.9"/>
<line x1="972.0" y1="279.3" x2="973.8" y2="279.3" stroke="#777" stroke-width="0.9"/>
<line x1="972.0" y1="274.6" x2="975.0" y2="274.6" stroke="#777" stroke-width="0.9"/>
<line x1="972.0" y1="269.9" x2="973.8" y2="269.9" stroke="#777" stroke-width="0.9"/>
<line x1="972.0" y1="265.2" x2="973.8" y2="265.2" stroke="#777" stroke-width="0.9"/>
<line x1="972.0" y1="260.5" x2="973.8" y2="260.5" stroke="#777" stroke-width="0.9"/>
<line x1="972.0" y1="255.8" x2="975.0" y2="255.8" stroke="#777" stroke-width="0.9"/>
<line x1="972.0" y1="251.1" x2="973.8" y2="251.1" stroke="#777" stroke-width="0.9"/>
<line x1="972.0" y1="246.4" x2="973.8" y2="246.4" stroke="#777" stroke-width="0.9"/>
<line x1="972.0" y1="241.7" x2="973.8" y2="241.7" stroke="#777" stroke-width="0.9"/>
<line x1="972.0" y1="237.0" x2="975.0" y2="237.0" stroke="#777" stroke-width="0.9"/>
<line x1="972.0" y1="232.3" x2="973.8" y2="232.3" stroke="#777" stroke-width="0.9"/>
<line x1="972.0" y1="227.6" x2="973.8" y2="227.6" stroke="#777" stroke-width="0.9"/>
<line x1="972.0" y1="222.9" x2="973.8" y2="222.9" stroke="#777" stroke-width="0.9"/>
<line x1="972.0" y1="218.2" x2="975.0" y2="218.2" stroke="#777" stroke-width="0.9"/>
<line x1="972.0" y1="213.5" x2="973.8" y2="213.5" stroke="#777" stroke-width="0.9"/>
<line x1="972.0" y1="208.8" x2="973.8" y2="208.8" stroke="#777" stroke-width="0.9"/>
<line x1="972.0" y1="204.2" x2="973.8" y2="204.2" stroke="#777" stroke-width="0.9"/>
<line x1="972.0" y1="199.5" x2="975.0" y2="199.5" stroke="#777" stroke-width="0.9"/>
<line x1="972.0" y1="194.8" x2="973.8" y2="194.8" stroke="#777" stroke-width="0.9"/>
<line x1="972.0" y1="190.1" x2="973.8" y2="190.1" stroke="#777" stroke-width="0.9"/>
<line x1="972.0" y1="185.4" x2="973.8" y2="185.4" stroke="#777" stroke-width="0.9"/>
<line x1="972.0" y1="180.7" x2="975.0" y2="180.7" stroke="#777" stroke-width="0.9"/>
<line x1="972.0" y1="176.0" x2="973.8" y2="176.0" stroke="#777" stroke-width="0.9"/>
<line x1="972.0" y1="171.3" x2="973.8" y2="171.3" stroke="#777" stroke-width="0.9"/>
<line x1="972.0" y1="166.6" x2="973.8" y2="166.6" stroke="#777" stroke-width="0.9"/>
<line x1="972.0" y1="161.9" x2="975.0" y2="161.9" stroke="#777" stroke-width="0.9"/>
<line x1="972.0" y1="157.2" x2="973.8" y2="157.2" stroke="#777" stroke-width="0.9"/>
<line x1="972.0" y1="152.5" x2="973.8" y2="152.5" stroke="#777" stroke-width="0.9"/>
<line x1="149.0" y1="612.8" x2="152.0" y2="612.8" stroke="#888" stroke-width="0.9"/>
<line x1="149.0" y1="534.4" x2="152.0" y2="534.4" stroke="#888" stroke-width="0.9"/>
<line x1="149.0" y1="456.1" x2="152.0" y2="456.1" stroke="#888" stroke-width="0.9"/>
<line x1="149.0" y1="377.7" x2="152.0" y2="377.7" stroke="#888" stroke-width="0.9"/>
<line x1="149.0" y1="299.4" x2="152.0" y2="299.4" stroke="#888" stroke-width="0.9"/>
<line x1="149.0" y1="221.0" x2="152.0" y2="221.0" stroke="#888" stroke-width="0.9"/>
<line x1="161.7" y1="619.2" x2="161.7" y2="622.2" stroke="#999" stroke-width="1"/>
<line x1="177.4" y1="619.2" x2="177.4" y2="622.2" stroke="#999" stroke-width="1"/>
<line x1="193.1" y1="619.2" x2="193.1" y2="622.2" stroke="#999" stroke-width="1"/>
<line x1="208.8" y1="619.2" x2="208.8" y2="622.2" stroke="#999" stroke-width="1"/>
<line x1="224.4" y1="619.2" x2="224.4" y2="622.2" stroke="#999" stroke-width="1"/>
<line x1="240.1" y1="619.2" x2="240.1" y2="622.2" stroke="#999" stroke-width="1"/>
<line x1="255.8" y1="619.2" x2="255.8" y2="622.2" stroke="#999" stroke-width="1"/>
<line x1="271.5" y1="619.2" x2="271.5" y2="622.2" stroke="#999" stroke-width="1"/>
<line x1="287.2" y1="619.2" x2="287.2" y2="622.2" stroke="#999" stroke-width="1"/>
<line x1="302.9" y1="619.2" x2="302.9" y2="622.2" stroke="#999" stroke-width="1"/>
<line x1="318.6" y1="619.2" x2="318.6" y2="622.2" stroke="#999" stroke-width="1"/>
<line x1="334.3" y1="619.2" x2="334.3" y2="622.2" stroke="#999" stroke-width="1"/>
<line x1="349.9" y1="619.2" x2="349.9" y2="622.2" stroke="#999" stroke-width="1"/>
<line x1="365.6" y1="619.2" x2="365.6" y2="622.2" stroke="#999" stroke-width="1"/>
<line x1="381.3" y1="619.2" x2="381.3" y2="622.2" stroke="#999" stroke-width="1"/>
<line x1="397.0" y1="619.2" x2="397.0" y2="622.2" stroke="#999" stroke-width="1"/>
<line x1="412.7" y1="619.2" x2="412.7" y2="622.2" stroke="#999" stroke-width="1"/>
<line x1="428.4" y1="619.2" x2="428.4" y2="622.2" stroke="#999" stroke-width="1"/>
<line x1="444.1" y1="619.2" x2="444.1" y2="622.2" stroke="#999" stroke-width="1"/>
<line x1="459.8" y1="619.2" x2="459.8" y2="622.2" stroke="#999" stroke-width="1"/>
<line x1="475.4" y1="619.2" x2="475.4" y2="622.2" stroke="#999" stroke-width="1"/>
<line x1="491.1" y1="619.2" x2="491.1" y2="622.2" stroke="#999" stroke-width="1"/>
<line x1="506.8" y1="619.2" x2="506.8" y2="622.2" stroke="#999" stroke-width="1"/>
<line x1="522.5" y1="619.2" x2="522.5" y2="622.2" stroke="#999" stroke-width="1"/>
<line x1="538.2" y1="619.2" x2="538.2" y2="622.2" stroke="#999" stroke-width="1"/>
<line x1="553.9" y1="619.2" x2="553.9" y2="622.2" stroke="#999" stroke-width="1"/>
<line x1="569.6" y1="619.2" x2="569.6" y2="622.2" stroke="#999" stroke-width="1"/>
<line x1="585.3" y1="619.2" x2="585.3" y2="622.2" stroke="#999" stroke-width="1"/>
<line x1="601.0" y1="619.2" x2="601.0" y2="622.2" stroke="#999" stroke-width="1"/>
<line x1="616.6" y1="619.2" x2="616.6" y2="622.2" stroke="#999" stroke-width="1"/>
<line x1="632.3" y1="619.2" x2="632.3" y2="622.2" stroke="#999" stroke-width="1"/>
<line x1="648.0" y1="619.2" x2="648.0" y2="622.2" stroke="#999" stroke-width="1"/>
<line x1="663.7" y1="619.2" x2="663.7" y2="622.2" stroke="#999" stroke-width="1"/>
<line x1="679.4" y1="619.2" x2="679.4" y2="622.2" stroke="#999" stroke-width="1"/>
<line x1="695.1" y1="619.2" x2="695.1" y2="622.2" stroke="#999" stroke-width="1"/>
<line x1="710.8" y1="619.2" x2="710.8" y2="622.2" stroke="#999" stroke-width="1"/>
<line x1="726.5" y1="619.2" x2="726.5" y2="622.2" stroke="#999" stroke-width="1"/>
<line x1="742.1" y1="619.2" x2="742.1" y2="622.2" stroke="#999" stroke-width="1"/>
<line x1="757.8" y1="619.2" x2="757.8" y2="622.2" stroke="#999" stroke-width="1"/>
<line x1="773.5" y1="619.2" x2="773.5" y2="622.2" stroke="#999" stroke-width="1"/>
<line x1="789.2" y1="619.2" x2="789.2" y2="622.2" stroke="#999" stroke-width="1"/>
<line x1="804.9" y1="619.2" x2="804.9" y2="622.2" stroke="#999" stroke-width="1"/>
<line x1="820.6" y1="619.2" x2="820.6" y2="622.2" stroke="#999" stroke-width="1"/>
<line x1="836.3" y1="619.2" x2="836.3" y2="622.2" stroke="#999" stroke-width="1"/>
<line x1="852.0" y1="619.2" x2="852.0" y2="622.2" stroke="#999" stroke-width="1"/>
<line x1="867.6" y1="619.2" x2="867.6" y2="622.2" stroke="#999" stroke-width="1"/>
<line x1="883.3" y1="619.2" x2="883.3" y2="622.2" stroke="#999" stroke-width="1"/>
<line x1="899.0" y1="619.2" x2="899.0" y2="622.2" stroke="#999" stroke-width="1"/>
<line x1="914.7" y1="619.2" x2="914.7" y2="622.2" stroke="#999" stroke-width="1"/>
<line x1="930.4" y1="619.2" x2="930.4" y2="622.2" stroke="#999" stroke-width="1"/>
<line x1="946.1" y1="619.2" x2="946.1" y2="622.2" stroke="#999" stroke-width="1"/>
<line x1="961.8" y1="619.2" x2="961.8" y2="622.2" stroke="#999" stroke-width="1"/>
<rect x="328.3" y="260.3" width="217.6" height="318" fill="none" stroke="#000" stroke-width="1.7" stroke-dasharray="3.2 1.8"/>
<g font-family="Liberation Sans, sans-serif" font-size="8" fill="#000"><text x="147.5" y="614.6" text-anchor="end" font-size="7.4" letter-spacing="-0.2">24</text><text x="147.5" y="536.2" text-anchor="end" font-size="7.4" letter-spacing="-0.2">25</text><text x="147.5" y="457.9" text-anchor="end" font-size="7.4" letter-spacing="-0.2">26</text><text x="147.5" y="379.5" text-anchor="end" font-size="7.4" letter-spacing="-0.2">27</text><text x="147.5" y="301.2" text-anchor="end" font-size="7.4" letter-spacing="-0.2">28</text><text x="147.5" y="222.8" text-anchor="end" font-size="7.4" letter-spacing="-0.2">29</text><text x="976" y="445.6" font-size="7.2" letter-spacing="-0.2">35</text><text x="976" y="426.8" font-size="7.2" letter-spacing="-0.2">36</text><text x="976" y="408.0" font-size="7.2" letter-spacing="-0.2">37</text><text x="976" y="389.2" font-size="7.2" letter-spacing="-0.2">38</text><text x="976" y="370.5" font-size="7.2" letter-spacing="-0.2">39</text><text x="976" y="351.7" font-size="7.2" letter-spacing="-0.2">40</text><text x="976" y="332.9" font-size="7.2" letter-spacing="-0.2">41</text><text x="976" y="314.1" font-size="7.2" letter-spacing="-0.2">42</text><text x="976" y="295.3" font-size="7.2" letter-spacing="-0.2">43</text><text x="976" y="276.6" font-size="7.2" letter-spacing="-0.2">44</text><text x="976" y="257.8" font-size="7.2" letter-spacing="-0.2">45</text><text x="976" y="239.0" font-size="7.2" letter-spacing="-0.2">46</text><text x="976" y="220.2" font-size="7.2" letter-spacing="-0.2">47</text><text x="976" y="201.5" font-size="7.2" letter-spacing="-0.2">48</text><text x="976" y="182.7" font-size="7.2" letter-spacing="-0.2">49</text><text x="976" y="163.9" font-size="7.2" letter-spacing="-0.2">50</text><text x="134" y="386" font-size="7.4">T</text><text x="985.5" y="387" font-size="7.2" letter-spacing="-0.3">RH</text><text x="161.2" y="631" text-anchor="middle" letter-spacing="-0.4">22-авг 12 ч</text><text x="223.9" y="631" text-anchor="middle" letter-spacing="-0.4">22-авг 18 ч</text><text x="286.7" y="631" text-anchor="middle" letter-spacing="-0.4">23-авг 00 ч</text><text x="349.4" y="631" text-anchor="middle" letter-spacing="-0.4">23-авг 06 ч</text><text x="412.2" y="631" text-anchor="middle" letter-spacing="-0.4">23-авг 12 ч</text><text x="474.9" y="631" text-anchor="middle" letter-spacing="-0.4">23-авг 18 ч</text><text x="537.7" y="631" text-anchor="middle" letter-spacing="-0.4">24-авг 00 ч</text><text x="600.5" y="631" text-anchor="middle" letter-spacing="-0.4">24-авг 06 ч</text></g>
</svg>
<svg width="1319" height="1001" style="position:absolute;left:0;top:0"><polygon points="547.0,260.5 1319.0,372.5 1319.0,1001.0 509.5,1001.0 330.5,579.0 547.0,579.0" fill="rgb(70,234,236)" fill-opacity="0.22"/></svg>
<div class="a" style="left:587px;top:447px;width:732px;height:554px;background:#fff;border-left:2px solid #3a3ab4;border-top:2px solid #3a3ab4;box-sizing:border-box"></div>
<svg width="1319" height="1001" style="position:absolute;left:0;top:0">
<g stroke="#828282" stroke-width="1.3" stroke-dasharray="2.5 3"><line x1="645.5" y1="474.0" x2="645.5" y2="1001"/><line x1="757.9" y1="474.0" x2="757.9" y2="1001"/><line x1="870.3" y1="474.0" x2="870.3" y2="1001"/><line x1="982.7" y1="474.0" x2="982.7" y2="1001"/><line x1="1095.1" y1="474.0" x2="1095.1" y2="1001"/><line x1="1207.5" y1="474.0" x2="1207.5" y2="1001"/><line x1="1319.9" y1="474.0" x2="1319.9" y2="1001"/><line x1="641.5" y1="503.2" x2="1319" y2="503.2"/><line x1="641.5" y1="542.8" x2="1319" y2="542.8"/><line x1="641.5" y1="582.4" x2="1319" y2="582.4"/><line x1="641.5" y1="622.0" x2="1319" y2="622.0"/><line x1="641.5" y1="661.6" x2="1319" y2="661.6"/><line x1="641.5" y1="701.2" x2="1319" y2="701.2"/><line x1="641.5" y1="740.8" x2="1319" y2="740.8"/><line x1="641.5" y1="780.4" x2="1319" y2="780.4"/><line x1="641.5" y1="820.0" x2="1319" y2="820.0"/><line x1="641.5" y1="859.6" x2="1319" y2="859.6"/><line x1="641.5" y1="899.2" x2="1319" y2="899.2"/><line x1="641.5" y1="938.8" x2="1319" y2="938.8"/><line x1="641.5" y1="978.4" x2="1319" y2="978.4"/><line x1="641.5" y1="555.8" x2="1319" y2="555.8"/><line x1="641.5" y1="721.0" x2="1319" y2="721.0"/><line x1="641.5" y1="885.8" x2="1319" y2="885.8"/></g>
<g fill="none" stroke-width="1.25" stroke-linejoin="round">
<polyline points="641.3,787.4 673.4,784.2 692.6,782.6 708.6,780.0 727.9,777.1 750.3,774.6 769.5,772.3 785.6,768.5 817.6,767.2 828.9,764.0 836.9,757.0 843.3,755.3 849.7,749.0 856.0,745.7 869.0,743.2 883.4,742.5 893.0,747.3 901.0,760.0 910.6,789.0 920.2,816.3 939.5,850.0 945.9,866.0 950.8,870.8 961.6,884.3 972.4,892.4 983.2,884.3 987.6,894.0 994.0,876.0 1005.0,854.6 1013.0,852.0 1021.0,854.6 1026.5,862.7 1037.3,881.6 1048.0,900.5 1059.0,908.6 1067.0,911.4 1075.0,930.0 1088.6,952.0 1099.5,976.0 1105.0,970.8 1115.7,1001.0" stroke="#62a1ad"/>
<polyline points="894.6,1001.0 902.6,936.5 909.0,891.6 913.8,859.5 920.2,821.0 928.2,780.4 936.3,753.7 940.0,738.0 945.4,722.0 959.0,708.6 969.7,701.6 975.0,706.0 983.0,722.0 988.6,741.0 996.8,811.0 1004.9,852.0 1010.3,841.0 1018.4,846.5 1026.5,833.0 1032.0,827.6 1037.3,789.7 1045.4,784.3 1053.5,773.5 1061.6,773.5 1075.0,741.0 1088.6,708.6 1094.0,714.0 1099.5,714.0 1104.9,730.0 1113.0,735.7 1126.5,740.0 1134.6,719.5 1145.4,700.5 1153.5,697.8 1161.6,702.0 1169.7,708.6 1175.0,706.0 1180.5,687.0 1194.0,662.7 1199.5,645.4 1207.6,649.0 1215.7,667.0 1221.0,657.3 1229.2,646.5 1234.6,635.7 1242.7,652.0 1256.0,630.0 1267.0,592.4 1280.5,568.0 1288.6,568.0 1299.5,562.7 1307.6,560.0 1313.0,560.0 1319.0,570.8" stroke="#df6e45"/>
</g>
<path d="M641.5,474.0 H1319" fill="none" stroke="#3c3c3c" stroke-width="1.8"/>
<path d="M641.5,1001 V474.0" fill="none" stroke="#000" stroke-width="2"/>
<g font-family="Liberation Sans, sans-serif" font-size="10.5" fill="#000"><line x1="636.5" y1="555.8" x2="641.5" y2="555.8" stroke="#000"/><text x="635.3" y="559.6" text-anchor="end">28</text><line x1="636.5" y1="721.0" x2="641.5" y2="721.0" stroke="#000"/><text x="635.3" y="724.8" text-anchor="end">27</text><line x1="636.5" y1="885.8" x2="641.5" y2="885.8" stroke="#000"/><text x="635.3" y="889.6" text-anchor="end">26</text><text x="615" y="813">T</text></g>
</svg>
</body></html>
